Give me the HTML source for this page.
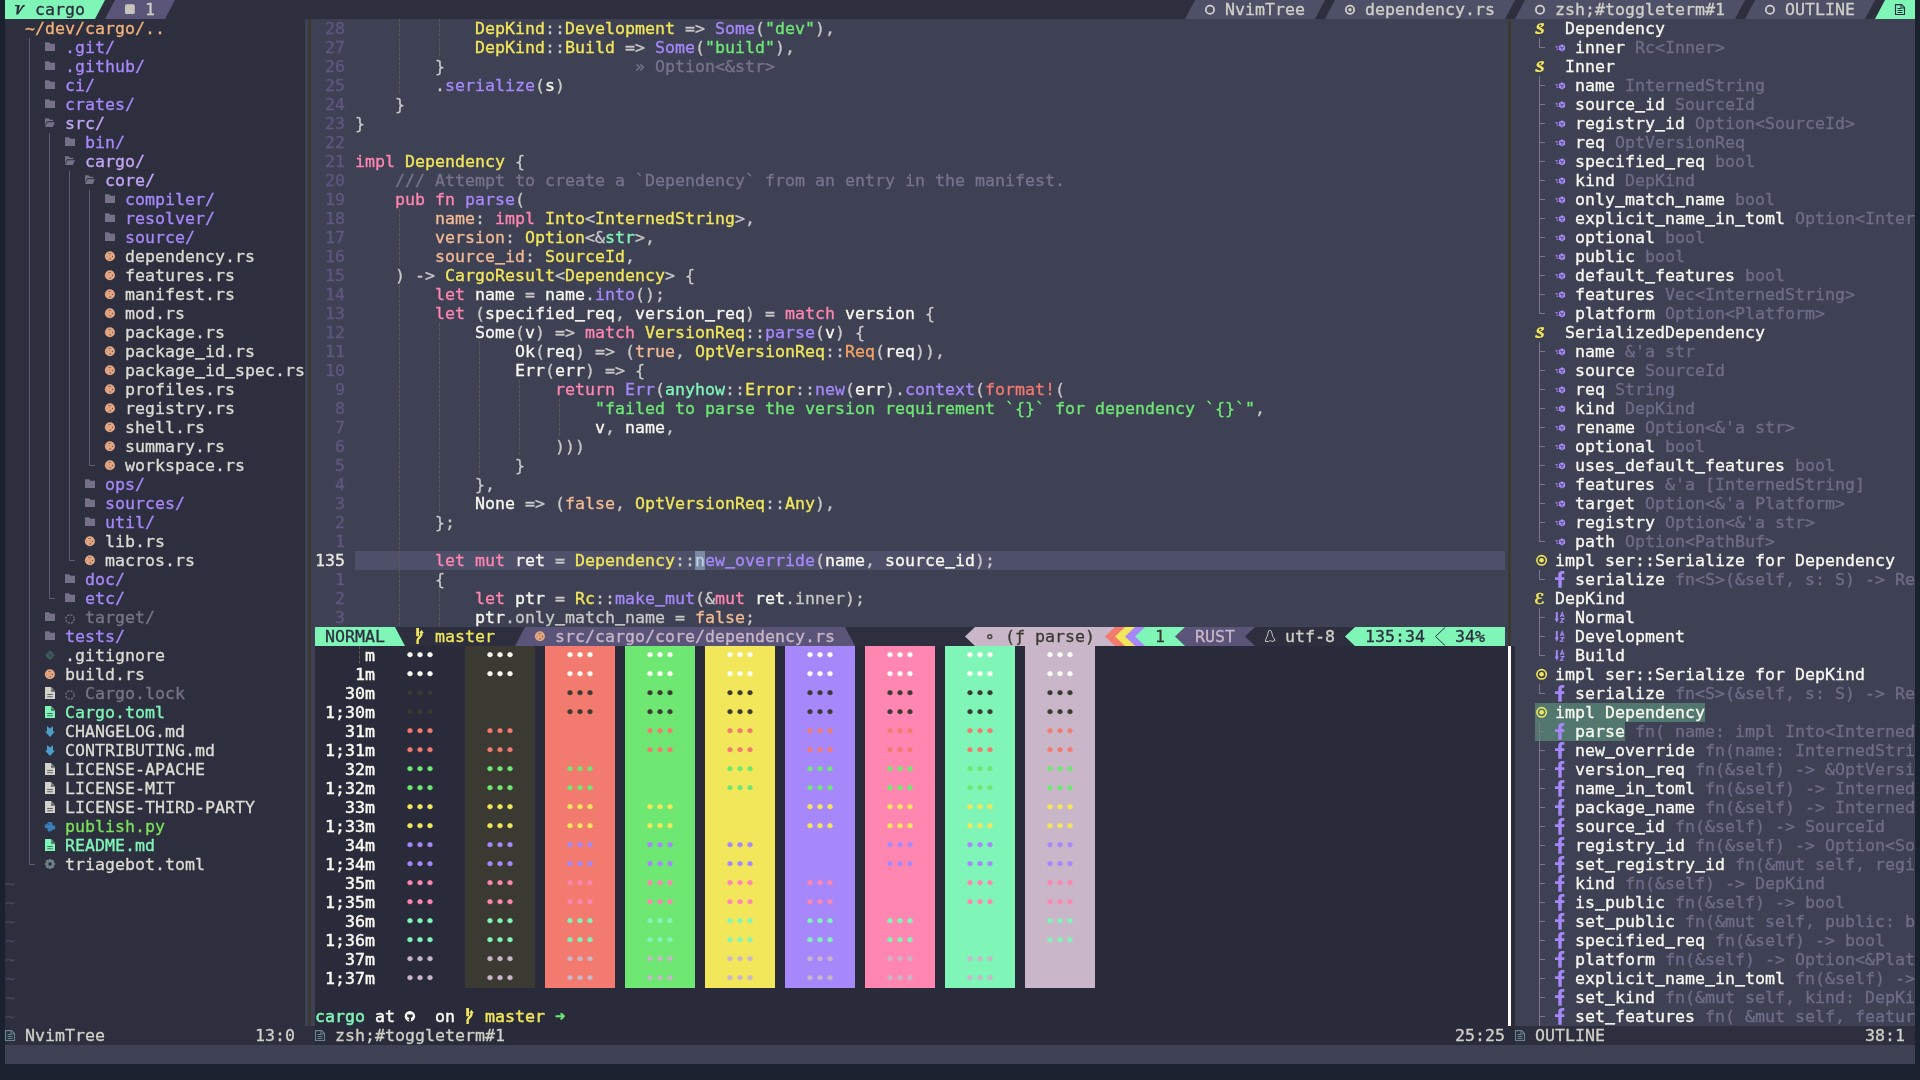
<!DOCTYPE html><html><head><meta charset="utf-8"><title>nvim - cargo</title><style>
html,body{margin:0;padding:0;background:#1a222f;}
body{width:1920px;height:1080px;overflow:hidden;position:relative;font-family:"DejaVu Sans Mono","Liberation Mono",monospace;font-size:16.61px;line-height:19px;}
#s{position:absolute;left:0;top:0;width:1920px;height:1080px;overflow:hidden;}
b{position:absolute;display:block;font-weight:normal;}
i{position:absolute;display:block;font-style:normal;white-space:pre;height:19px;-webkit-text-stroke:0.3px;}
u{text-decoration:none;display:inline-block;transform:translateY(-1.7px);text-shadow:0 .7px 0 currentColor,0 -.3px 0 currentColor;}
#t{position:absolute;left:0;top:0;width:1920px;height:1080px;will-change:transform;}
svg.o{position:absolute;left:0;top:0;}

</style></head><body><div id="s">
<b style="left:5px;top:0px;width:1910px;height:19px;background:#2d2e3e"></b>
<b style="left:5px;top:19px;width:300px;height:1007px;background:#2d2e3e"></b>
<b style="left:305px;top:19px;width:10px;height:1007px;background:#3e4054"></b>
<b style="left:308px;top:19px;width:3px;height:1007px;background:#3a3a32"></b>
<b style="left:315px;top:19px;width:1200px;height:608px;background:#3e4054"></b>
<b style="left:315px;top:627px;width:1190px;height:19px;background:#2d2e3e"></b>
<b style="left:1505px;top:627px;width:10px;height:19px;background:#3e4054"></b>
<b style="left:315px;top:646px;width:1200px;height:380px;background:#2a2b3a"></b>
<b style="left:1508px;top:19px;width:3px;height:627px;background:#3a3a32"></b>
<b style="left:1508px;top:646px;width:3px;height:380px;background:#fbfbf3"></b>
<b style="left:1515px;top:19px;width:400px;height:1007px;background:#3e4054"></b>
<b style="left:5px;top:1026px;width:1910px;height:19px;background:#2d2e3e"></b>
<b style="left:315px;top:1026px;width:1200px;height:19px;background:#2a2b3a"></b>
<b style="left:5px;top:1045px;width:1910px;height:19px;background:#3e4054"></b>
<b style="left:5px;top:0px;width:90px;height:19px;background:#80f5b8"></b>
<b style="left:115px;top:0px;width:50px;height:19px;background:#5a5578"></b>
<b style="left:1195px;top:0px;width:120px;height:19px;background:#4e5068"></b>
<b style="left:1335px;top:0px;width:170px;height:19px;background:#4e5068"></b>
<b style="left:1525px;top:0px;width:210px;height:19px;background:#4e5068"></b>
<b style="left:1755px;top:0px;width:110px;height:19px;background:#4e5068"></b>
<b style="left:1885px;top:0px;width:30px;height:19px;background:#80f5b8"></b>
<b style="left:355px;top:551px;width:1150px;height:19px;background:#4e5069"></b>
<b style="left:695px;top:551px;width:10px;height:19px;background:#7b8aa3"></b>
<b style="left:315px;top:627px;width:80px;height:19px;background:#80f5b8"></b>
<b style="left:525px;top:627px;width:320px;height:19px;background:#5a5578"></b>
<b style="left:975px;top:627px;width:130px;height:19px;background:#c9b6c8"></b>
<b style="left:1105px;top:627px;width:10px;height:19px;background:#c9b6c8"></b>
<b style="left:1115px;top:627px;width:10px;height:19px;background:#f27a6e"></b>
<b style="left:1125px;top:627px;width:10px;height:19px;background:#f2e75a"></b>
<b style="left:1135px;top:627px;width:10px;height:19px;background:#a688fa"></b>
<b style="left:1145px;top:627px;width:40px;height:19px;background:#80f5b8"></b>
<b style="left:1185px;top:627px;width:60px;height:19px;background:#5a5578"></b>
<b style="left:1245px;top:627px;width:10px;height:19px;background:#5a5578"></b>
<b style="left:1355px;top:627px;width:150px;height:19px;background:#80f5b8"></b>
<b style="left:465px;top:646px;width:70px;height:342px;background:#3a3a32"></b>
<b style="left:545px;top:646px;width:70px;height:342px;background:#f27a6e"></b>
<b style="left:625px;top:646px;width:70px;height:342px;background:#6ee873"></b>
<b style="left:705px;top:646px;width:70px;height:342px;background:#f2e75a"></b>
<b style="left:785px;top:646px;width:70px;height:342px;background:#a688fa"></b>
<b style="left:865px;top:646px;width:70px;height:342px;background:#ff86b0"></b>
<b style="left:945px;top:646px;width:70px;height:342px;background:#80f5b8"></b>
<b style="left:1025px;top:646px;width:70px;height:342px;background:#c9b6c8"></b>
<b style="left:1535px;top:703px;width:170px;height:19px;background:#52776f"></b>
<b style="left:1535px;top:722px;width:90px;height:19px;background:#52776f"></b>
<svg class="o" width="1920" height="1080" viewBox="0 0 1920 1080">
<polygon points="95,0 105,0 95,19" fill="#80f5b8"/>
<polygon points="115,0 115,19 105,19" fill="#5a5578"/>
<polygon points="165,0 175,0 165,19" fill="#5a5578"/>
<polygon points="1195,0 1195,19 1185,19" fill="#4e5068"/>
<circle cx="1210" cy="9.75" r="4.1" fill="none" stroke="#d0d0c8" stroke-width="1.8"/>
<polygon points="1315,0 1325,0 1315,19" fill="#4e5068"/>
<polygon points="1335,0 1335,19 1325,19" fill="#4e5068"/>
<circle cx="1350" cy="9.75" r="4.1" fill="none" stroke="#d0d0c8" stroke-width="1.8"/>
<circle cx="1350" cy="9.75" r="1.7" fill="#d0d0c8"/>
<polygon points="1505,0 1515,0 1505,19" fill="#4e5068"/>
<polygon points="1525,0 1525,19 1515,19" fill="#4e5068"/>
<circle cx="1540" cy="9.75" r="4.1" fill="none" stroke="#d0d0c8" stroke-width="1.8"/>
<polygon points="1735,0 1745,0 1735,19" fill="#4e5068"/>
<polygon points="1755,0 1755,19 1745,19" fill="#4e5068"/>
<circle cx="1770" cy="9.75" r="4.1" fill="none" stroke="#d0d0c8" stroke-width="1.8"/>
<polygon points="1865,0 1875,0 1865,19" fill="#4e5068"/>
<polygon points="1885,0 1885,19 1875,19" fill="#80f5b8"/>
<rect x="29" y="38" width="1" height="19" fill="#5f5a7a"/>
<rect x="29" y="57" width="1" height="19" fill="#5f5a7a"/>
<rect x="29" y="76" width="1" height="19" fill="#5f5a7a"/>
<rect x="29" y="95" width="1" height="19" fill="#5f5a7a"/>
<rect x="29" y="114" width="1" height="19" fill="#5f5a7a"/>
<rect x="29" y="133" width="1" height="19" fill="#5f5a7a"/>
<rect x="49" y="133" width="1" height="19" fill="#5f5a7a"/>
<rect x="29" y="152" width="1" height="19" fill="#5f5a7a"/>
<rect x="49" y="152" width="1" height="19" fill="#5f5a7a"/>
<rect x="29" y="171" width="1" height="19" fill="#5f5a7a"/>
<rect x="49" y="171" width="1" height="19" fill="#5f5a7a"/>
<rect x="69" y="171" width="1" height="19" fill="#5f5a7a"/>
<rect x="29" y="190" width="1" height="19" fill="#5f5a7a"/>
<rect x="49" y="190" width="1" height="19" fill="#5f5a7a"/>
<rect x="69" y="190" width="1" height="19" fill="#5f5a7a"/>
<rect x="89" y="190" width="1" height="19" fill="#5f5a7a"/>
<rect x="29" y="209" width="1" height="19" fill="#5f5a7a"/>
<rect x="49" y="209" width="1" height="19" fill="#5f5a7a"/>
<rect x="69" y="209" width="1" height="19" fill="#5f5a7a"/>
<rect x="89" y="209" width="1" height="19" fill="#5f5a7a"/>
<rect x="29" y="228" width="1" height="19" fill="#5f5a7a"/>
<rect x="49" y="228" width="1" height="19" fill="#5f5a7a"/>
<rect x="69" y="228" width="1" height="19" fill="#5f5a7a"/>
<rect x="89" y="228" width="1" height="19" fill="#5f5a7a"/>
<rect x="29" y="247" width="1" height="19" fill="#5f5a7a"/>
<rect x="49" y="247" width="1" height="19" fill="#5f5a7a"/>
<rect x="69" y="247" width="1" height="19" fill="#5f5a7a"/>
<rect x="89" y="247" width="1" height="19" fill="#5f5a7a"/>
<rect x="29" y="266" width="1" height="19" fill="#5f5a7a"/>
<rect x="49" y="266" width="1" height="19" fill="#5f5a7a"/>
<rect x="69" y="266" width="1" height="19" fill="#5f5a7a"/>
<rect x="89" y="266" width="1" height="19" fill="#5f5a7a"/>
<rect x="29" y="285" width="1" height="19" fill="#5f5a7a"/>
<rect x="49" y="285" width="1" height="19" fill="#5f5a7a"/>
<rect x="69" y="285" width="1" height="19" fill="#5f5a7a"/>
<rect x="89" y="285" width="1" height="19" fill="#5f5a7a"/>
<rect x="29" y="304" width="1" height="19" fill="#5f5a7a"/>
<rect x="49" y="304" width="1" height="19" fill="#5f5a7a"/>
<rect x="69" y="304" width="1" height="19" fill="#5f5a7a"/>
<rect x="89" y="304" width="1" height="19" fill="#5f5a7a"/>
<rect x="29" y="323" width="1" height="19" fill="#5f5a7a"/>
<rect x="49" y="323" width="1" height="19" fill="#5f5a7a"/>
<rect x="69" y="323" width="1" height="19" fill="#5f5a7a"/>
<rect x="89" y="323" width="1" height="19" fill="#5f5a7a"/>
<rect x="29" y="342" width="1" height="19" fill="#5f5a7a"/>
<rect x="49" y="342" width="1" height="19" fill="#5f5a7a"/>
<rect x="69" y="342" width="1" height="19" fill="#5f5a7a"/>
<rect x="89" y="342" width="1" height="19" fill="#5f5a7a"/>
<rect x="29" y="361" width="1" height="19" fill="#5f5a7a"/>
<rect x="49" y="361" width="1" height="19" fill="#5f5a7a"/>
<rect x="69" y="361" width="1" height="19" fill="#5f5a7a"/>
<rect x="89" y="361" width="1" height="19" fill="#5f5a7a"/>
<rect x="29" y="380" width="1" height="19" fill="#5f5a7a"/>
<rect x="49" y="380" width="1" height="19" fill="#5f5a7a"/>
<rect x="69" y="380" width="1" height="19" fill="#5f5a7a"/>
<rect x="89" y="380" width="1" height="19" fill="#5f5a7a"/>
<rect x="29" y="399" width="1" height="19" fill="#5f5a7a"/>
<rect x="49" y="399" width="1" height="19" fill="#5f5a7a"/>
<rect x="69" y="399" width="1" height="19" fill="#5f5a7a"/>
<rect x="89" y="399" width="1" height="19" fill="#5f5a7a"/>
<rect x="29" y="418" width="1" height="19" fill="#5f5a7a"/>
<rect x="49" y="418" width="1" height="19" fill="#5f5a7a"/>
<rect x="69" y="418" width="1" height="19" fill="#5f5a7a"/>
<rect x="89" y="418" width="1" height="19" fill="#5f5a7a"/>
<rect x="29" y="437" width="1" height="19" fill="#5f5a7a"/>
<rect x="49" y="437" width="1" height="19" fill="#5f5a7a"/>
<rect x="69" y="437" width="1" height="19" fill="#5f5a7a"/>
<rect x="89" y="437" width="1" height="19" fill="#5f5a7a"/>
<rect x="29" y="456" width="1" height="19" fill="#5f5a7a"/>
<rect x="49" y="456" width="1" height="19" fill="#5f5a7a"/>
<rect x="69" y="456" width="1" height="19" fill="#5f5a7a"/>
<rect x="89" y="456" width="1" height="10" fill="#5f5a7a"/>
<rect x="89" y="465" width="6" height="1" fill="#5f5a7a"/>
<rect x="29" y="475" width="1" height="19" fill="#5f5a7a"/>
<rect x="49" y="475" width="1" height="19" fill="#5f5a7a"/>
<rect x="69" y="475" width="1" height="19" fill="#5f5a7a"/>
<rect x="29" y="494" width="1" height="19" fill="#5f5a7a"/>
<rect x="49" y="494" width="1" height="19" fill="#5f5a7a"/>
<rect x="69" y="494" width="1" height="19" fill="#5f5a7a"/>
<rect x="29" y="513" width="1" height="19" fill="#5f5a7a"/>
<rect x="49" y="513" width="1" height="19" fill="#5f5a7a"/>
<rect x="69" y="513" width="1" height="19" fill="#5f5a7a"/>
<rect x="29" y="532" width="1" height="19" fill="#5f5a7a"/>
<rect x="49" y="532" width="1" height="19" fill="#5f5a7a"/>
<rect x="69" y="532" width="1" height="19" fill="#5f5a7a"/>
<rect x="29" y="551" width="1" height="19" fill="#5f5a7a"/>
<rect x="49" y="551" width="1" height="19" fill="#5f5a7a"/>
<rect x="69" y="551" width="1" height="10" fill="#5f5a7a"/>
<rect x="69" y="560" width="6" height="1" fill="#5f5a7a"/>
<rect x="29" y="570" width="1" height="19" fill="#5f5a7a"/>
<rect x="49" y="570" width="1" height="19" fill="#5f5a7a"/>
<rect x="29" y="589" width="1" height="19" fill="#5f5a7a"/>
<rect x="49" y="589" width="1" height="10" fill="#5f5a7a"/>
<rect x="49" y="598" width="6" height="1" fill="#5f5a7a"/>
<rect x="29" y="608" width="1" height="19" fill="#5f5a7a"/>
<rect x="29" y="627" width="1" height="19" fill="#5f5a7a"/>
<rect x="29" y="646" width="1" height="19" fill="#5f5a7a"/>
<rect x="29" y="665" width="1" height="19" fill="#5f5a7a"/>
<rect x="29" y="684" width="1" height="19" fill="#5f5a7a"/>
<rect x="29" y="703" width="1" height="19" fill="#5f5a7a"/>
<rect x="29" y="722" width="1" height="19" fill="#5f5a7a"/>
<rect x="29" y="741" width="1" height="19" fill="#5f5a7a"/>
<rect x="29" y="760" width="1" height="19" fill="#5f5a7a"/>
<rect x="29" y="779" width="1" height="19" fill="#5f5a7a"/>
<rect x="29" y="798" width="1" height="19" fill="#5f5a7a"/>
<rect x="29" y="817" width="1" height="19" fill="#5f5a7a"/>
<rect x="29" y="836" width="1" height="19" fill="#5f5a7a"/>
<rect x="29" y="855" width="1" height="10" fill="#5f5a7a"/>
<rect x="29" y="864" width="6" height="1" fill="#5f5a7a"/>
<line x1="399.5" y1="19" x2="399.5" y2="38" stroke="#5b594f" stroke-width="1" stroke-dasharray="3.5 1.25"/>
<line x1="439.5" y1="19" x2="439.5" y2="38" stroke="#5b594f" stroke-width="1" stroke-dasharray="3.5 1.25"/>
<line x1="399.5" y1="38" x2="399.5" y2="57" stroke="#5b594f" stroke-width="1" stroke-dasharray="3.5 1.25"/>
<line x1="439.5" y1="38" x2="439.5" y2="57" stroke="#5b594f" stroke-width="1" stroke-dasharray="3.5 1.25"/>
<line x1="399.5" y1="57" x2="399.5" y2="76" stroke="#5b594f" stroke-width="1" stroke-dasharray="3.5 1.25"/>
<line x1="399.5" y1="76" x2="399.5" y2="95" stroke="#5b594f" stroke-width="1" stroke-dasharray="3.5 1.25"/>
<line x1="399.5" y1="209" x2="399.5" y2="228" stroke="#5b594f" stroke-width="1" stroke-dasharray="3.5 1.25"/>
<line x1="399.5" y1="228" x2="399.5" y2="247" stroke="#5b594f" stroke-width="1" stroke-dasharray="3.5 1.25"/>
<line x1="399.5" y1="247" x2="399.5" y2="266" stroke="#5b594f" stroke-width="1" stroke-dasharray="3.5 1.25"/>
<line x1="399.5" y1="285" x2="399.5" y2="304" stroke="#5b594f" stroke-width="1" stroke-dasharray="3.5 1.25"/>
<line x1="399.5" y1="304" x2="399.5" y2="323" stroke="#5b594f" stroke-width="1" stroke-dasharray="3.5 1.25"/>
<line x1="399.5" y1="323" x2="399.5" y2="342" stroke="#5b594f" stroke-width="1" stroke-dasharray="3.5 1.25"/>
<line x1="439.5" y1="323" x2="439.5" y2="342" stroke="#5b594f" stroke-width="1" stroke-dasharray="3.5 1.25"/>
<line x1="399.5" y1="342" x2="399.5" y2="361" stroke="#5b594f" stroke-width="1" stroke-dasharray="3.5 1.25"/>
<line x1="439.5" y1="342" x2="439.5" y2="361" stroke="#5b594f" stroke-width="1" stroke-dasharray="3.5 1.25"/>
<line x1="479.5" y1="342" x2="479.5" y2="361" stroke="#5b594f" stroke-width="1" stroke-dasharray="3.5 1.25"/>
<line x1="399.5" y1="361" x2="399.5" y2="380" stroke="#5b594f" stroke-width="1" stroke-dasharray="3.5 1.25"/>
<line x1="439.5" y1="361" x2="439.5" y2="380" stroke="#5b594f" stroke-width="1" stroke-dasharray="3.5 1.25"/>
<line x1="479.5" y1="361" x2="479.5" y2="380" stroke="#5b594f" stroke-width="1" stroke-dasharray="3.5 1.25"/>
<line x1="399.5" y1="380" x2="399.5" y2="399" stroke="#5b594f" stroke-width="1" stroke-dasharray="3.5 1.25"/>
<line x1="439.5" y1="380" x2="439.5" y2="399" stroke="#5b594f" stroke-width="1" stroke-dasharray="3.5 1.25"/>
<line x1="479.5" y1="380" x2="479.5" y2="399" stroke="#5b594f" stroke-width="1" stroke-dasharray="3.5 1.25"/>
<line x1="519.5" y1="380" x2="519.5" y2="399" stroke="#5b594f" stroke-width="1" stroke-dasharray="3.5 1.25"/>
<line x1="399.5" y1="399" x2="399.5" y2="418" stroke="#5b594f" stroke-width="1" stroke-dasharray="3.5 1.25"/>
<line x1="439.5" y1="399" x2="439.5" y2="418" stroke="#5b594f" stroke-width="1" stroke-dasharray="3.5 1.25"/>
<line x1="479.5" y1="399" x2="479.5" y2="418" stroke="#5b594f" stroke-width="1" stroke-dasharray="3.5 1.25"/>
<line x1="519.5" y1="399" x2="519.5" y2="418" stroke="#5b594f" stroke-width="1" stroke-dasharray="3.5 1.25"/>
<line x1="559.5" y1="399" x2="559.5" y2="418" stroke="#5b594f" stroke-width="1" stroke-dasharray="3.5 1.25"/>
<line x1="399.5" y1="418" x2="399.5" y2="437" stroke="#5b594f" stroke-width="1" stroke-dasharray="3.5 1.25"/>
<line x1="439.5" y1="418" x2="439.5" y2="437" stroke="#5b594f" stroke-width="1" stroke-dasharray="3.5 1.25"/>
<line x1="479.5" y1="418" x2="479.5" y2="437" stroke="#5b594f" stroke-width="1" stroke-dasharray="3.5 1.25"/>
<line x1="519.5" y1="418" x2="519.5" y2="437" stroke="#5b594f" stroke-width="1" stroke-dasharray="3.5 1.25"/>
<line x1="559.5" y1="418" x2="559.5" y2="437" stroke="#5b594f" stroke-width="1" stroke-dasharray="3.5 1.25"/>
<line x1="399.5" y1="437" x2="399.5" y2="456" stroke="#5b594f" stroke-width="1" stroke-dasharray="3.5 1.25"/>
<line x1="439.5" y1="437" x2="439.5" y2="456" stroke="#5b594f" stroke-width="1" stroke-dasharray="3.5 1.25"/>
<line x1="479.5" y1="437" x2="479.5" y2="456" stroke="#5b594f" stroke-width="1" stroke-dasharray="3.5 1.25"/>
<line x1="519.5" y1="437" x2="519.5" y2="456" stroke="#5b594f" stroke-width="1" stroke-dasharray="3.5 1.25"/>
<line x1="399.5" y1="456" x2="399.5" y2="475" stroke="#5b594f" stroke-width="1" stroke-dasharray="3.5 1.25"/>
<line x1="439.5" y1="456" x2="439.5" y2="475" stroke="#5b594f" stroke-width="1" stroke-dasharray="3.5 1.25"/>
<line x1="479.5" y1="456" x2="479.5" y2="475" stroke="#5b594f" stroke-width="1" stroke-dasharray="3.5 1.25"/>
<line x1="399.5" y1="475" x2="399.5" y2="494" stroke="#5b594f" stroke-width="1" stroke-dasharray="3.5 1.25"/>
<line x1="439.5" y1="475" x2="439.5" y2="494" stroke="#5b594f" stroke-width="1" stroke-dasharray="3.5 1.25"/>
<line x1="399.5" y1="494" x2="399.5" y2="513" stroke="#5b594f" stroke-width="1" stroke-dasharray="3.5 1.25"/>
<line x1="439.5" y1="494" x2="439.5" y2="513" stroke="#5b594f" stroke-width="1" stroke-dasharray="3.5 1.25"/>
<line x1="399.5" y1="513" x2="399.5" y2="532" stroke="#5b594f" stroke-width="1" stroke-dasharray="3.5 1.25"/>
<line x1="399.5" y1="532" x2="399.5" y2="551" stroke="#5b594f" stroke-width="1" stroke-dasharray="3.5 1.25"/>
<line x1="399.5" y1="551" x2="399.5" y2="570" stroke="#5b594f" stroke-width="1" stroke-dasharray="3.5 1.25"/>
<line x1="399.5" y1="570" x2="399.5" y2="589" stroke="#5b594f" stroke-width="1" stroke-dasharray="3.5 1.25"/>
<line x1="399.5" y1="589" x2="399.5" y2="608" stroke="#5b594f" stroke-width="1" stroke-dasharray="3.5 1.25"/>
<line x1="439.5" y1="589" x2="439.5" y2="608" stroke="#5b594f" stroke-width="1" stroke-dasharray="3.5 1.25"/>
<line x1="399.5" y1="608" x2="399.5" y2="627" stroke="#5b594f" stroke-width="1" stroke-dasharray="3.5 1.25"/>
<line x1="439.5" y1="608" x2="439.5" y2="627" stroke="#5b594f" stroke-width="1" stroke-dasharray="3.5 1.25"/>
<polygon points="395,627 405,646 395,646" fill="#80f5b8"/>
<polygon points="525,627 525,646 515,646" fill="#5a5578"/>
<polygon points="845,627 855,646 845,646" fill="#5a5578"/>
<polygon points="975,627 965,636.5 975,646" fill="#c9b6c8"/>
<polygon points="1115,627 1105,636.5 1115,646" fill="#f27a6e"/>
<polygon points="1125,627 1115,636.5 1125,646" fill="#f2e75a"/>
<polygon points="1135,627 1125,636.5 1135,646" fill="#a688fa"/>
<polygon points="1145,627 1135,636.5 1145,646" fill="#80f5b8"/>
<polygon points="1185,627 1175,636.5 1185,646" fill="#5a5578"/>
<polygon points="1255,627 1245,636.5 1255,646" fill="#2d2e3e"/>
<polygon points="1355,627 1345,636.5 1355,646" fill="#80f5b8"/>
<polyline points="1445,627.5 1435.5,636.5 1445,645.5" fill="none" stroke="#2d2e3e" stroke-width="1"/>
<line x1="359.5" y1="646" x2="359.5" y2="665" stroke="#5b594f" stroke-width="1" stroke-dasharray="3.5 1.25"/>
<rect x="1539" y="38" width="1" height="10" fill="#7a7690"/>
<rect x="1539" y="47" width="6" height="1" fill="#7a7690"/>
<rect x="1539" y="76" width="1" height="19" fill="#7a7690"/>
<rect x="1539" y="85" width="6" height="1" fill="#7a7690"/>
<rect x="1539" y="95" width="1" height="19" fill="#7a7690"/>
<rect x="1539" y="104" width="6" height="1" fill="#7a7690"/>
<rect x="1539" y="114" width="1" height="19" fill="#7a7690"/>
<rect x="1539" y="123" width="6" height="1" fill="#7a7690"/>
<rect x="1539" y="133" width="1" height="19" fill="#7a7690"/>
<rect x="1539" y="142" width="6" height="1" fill="#7a7690"/>
<rect x="1539" y="152" width="1" height="19" fill="#7a7690"/>
<rect x="1539" y="161" width="6" height="1" fill="#7a7690"/>
<rect x="1539" y="171" width="1" height="19" fill="#7a7690"/>
<rect x="1539" y="180" width="6" height="1" fill="#7a7690"/>
<rect x="1539" y="190" width="1" height="19" fill="#7a7690"/>
<rect x="1539" y="199" width="6" height="1" fill="#7a7690"/>
<rect x="1539" y="209" width="1" height="19" fill="#7a7690"/>
<rect x="1539" y="218" width="6" height="1" fill="#7a7690"/>
<rect x="1539" y="228" width="1" height="19" fill="#7a7690"/>
<rect x="1539" y="237" width="6" height="1" fill="#7a7690"/>
<rect x="1539" y="247" width="1" height="19" fill="#7a7690"/>
<rect x="1539" y="256" width="6" height="1" fill="#7a7690"/>
<rect x="1539" y="266" width="1" height="19" fill="#7a7690"/>
<rect x="1539" y="275" width="6" height="1" fill="#7a7690"/>
<rect x="1539" y="285" width="1" height="19" fill="#7a7690"/>
<rect x="1539" y="294" width="6" height="1" fill="#7a7690"/>
<rect x="1539" y="304" width="1" height="10" fill="#7a7690"/>
<rect x="1539" y="313" width="6" height="1" fill="#7a7690"/>
<rect x="1539" y="342" width="1" height="19" fill="#7a7690"/>
<rect x="1539" y="351" width="6" height="1" fill="#7a7690"/>
<rect x="1539" y="361" width="1" height="19" fill="#7a7690"/>
<rect x="1539" y="370" width="6" height="1" fill="#7a7690"/>
<rect x="1539" y="380" width="1" height="19" fill="#7a7690"/>
<rect x="1539" y="389" width="6" height="1" fill="#7a7690"/>
<rect x="1539" y="399" width="1" height="19" fill="#7a7690"/>
<rect x="1539" y="408" width="6" height="1" fill="#7a7690"/>
<rect x="1539" y="418" width="1" height="19" fill="#7a7690"/>
<rect x="1539" y="427" width="6" height="1" fill="#7a7690"/>
<rect x="1539" y="437" width="1" height="19" fill="#7a7690"/>
<rect x="1539" y="446" width="6" height="1" fill="#7a7690"/>
<rect x="1539" y="456" width="1" height="19" fill="#7a7690"/>
<rect x="1539" y="465" width="6" height="1" fill="#7a7690"/>
<rect x="1539" y="475" width="1" height="19" fill="#7a7690"/>
<rect x="1539" y="484" width="6" height="1" fill="#7a7690"/>
<rect x="1539" y="494" width="1" height="19" fill="#7a7690"/>
<rect x="1539" y="503" width="6" height="1" fill="#7a7690"/>
<rect x="1539" y="513" width="1" height="19" fill="#7a7690"/>
<rect x="1539" y="522" width="6" height="1" fill="#7a7690"/>
<rect x="1539" y="532" width="1" height="10" fill="#7a7690"/>
<rect x="1539" y="541" width="6" height="1" fill="#7a7690"/>
<rect x="1539" y="570" width="1" height="10" fill="#7a7690"/>
<rect x="1539" y="579" width="6" height="1" fill="#7a7690"/>
<rect x="1539" y="608" width="1" height="19" fill="#7a7690"/>
<rect x="1539" y="617" width="6" height="1" fill="#7a7690"/>
<rect x="1539" y="627" width="1" height="19" fill="#7a7690"/>
<rect x="1539" y="636" width="6" height="1" fill="#7a7690"/>
<rect x="1539" y="646" width="1" height="10" fill="#7a7690"/>
<rect x="1539" y="655" width="6" height="1" fill="#7a7690"/>
<rect x="1539" y="684" width="1" height="10" fill="#7a7690"/>
<rect x="1539" y="693" width="6" height="1" fill="#7a7690"/>
<rect x="1539" y="722" width="1" height="19" fill="#7a7690"/>
<rect x="1539" y="731" width="6" height="1" fill="#7a7690"/>
<rect x="1539" y="741" width="1" height="19" fill="#7a7690"/>
<rect x="1539" y="750" width="6" height="1" fill="#7a7690"/>
<rect x="1539" y="760" width="1" height="19" fill="#7a7690"/>
<rect x="1539" y="769" width="6" height="1" fill="#7a7690"/>
<rect x="1539" y="779" width="1" height="19" fill="#7a7690"/>
<rect x="1539" y="788" width="6" height="1" fill="#7a7690"/>
<rect x="1539" y="798" width="1" height="19" fill="#7a7690"/>
<rect x="1539" y="807" width="6" height="1" fill="#7a7690"/>
<rect x="1539" y="817" width="1" height="19" fill="#7a7690"/>
<rect x="1539" y="826" width="6" height="1" fill="#7a7690"/>
<rect x="1539" y="836" width="1" height="19" fill="#7a7690"/>
<rect x="1539" y="845" width="6" height="1" fill="#7a7690"/>
<rect x="1539" y="855" width="1" height="19" fill="#7a7690"/>
<rect x="1539" y="864" width="6" height="1" fill="#7a7690"/>
<rect x="1539" y="874" width="1" height="19" fill="#7a7690"/>
<rect x="1539" y="883" width="6" height="1" fill="#7a7690"/>
<rect x="1539" y="893" width="1" height="19" fill="#7a7690"/>
<rect x="1539" y="902" width="6" height="1" fill="#7a7690"/>
<rect x="1539" y="912" width="1" height="19" fill="#7a7690"/>
<rect x="1539" y="921" width="6" height="1" fill="#7a7690"/>
<rect x="1539" y="931" width="1" height="19" fill="#7a7690"/>
<rect x="1539" y="940" width="6" height="1" fill="#7a7690"/>
<rect x="1539" y="950" width="1" height="19" fill="#7a7690"/>
<rect x="1539" y="959" width="6" height="1" fill="#7a7690"/>
<rect x="1539" y="969" width="1" height="19" fill="#7a7690"/>
<rect x="1539" y="978" width="6" height="1" fill="#7a7690"/>
<rect x="1539" y="988" width="1" height="19" fill="#7a7690"/>
<rect x="1539" y="997" width="6" height="1" fill="#7a7690"/>
<rect x="1539" y="1007" width="1" height="19" fill="#7a7690"/>
<rect x="1539" y="1016" width="6" height="1" fill="#7a7690"/>
<g transform="translate(45,38)"><polygon points="0,4.3 4,4.3 5.5,5.8 10,5.8 10,13 0,13" fill="#747087"/></g>
<g transform="translate(45,57)"><polygon points="0,4.3 4,4.3 5.5,5.8 10,5.8 10,13 0,13" fill="#747087"/></g>
<g transform="translate(45,76)"><polygon points="0,4.3 4,4.3 5.5,5.8 10,5.8 10,13 0,13" fill="#747087"/></g>
<g transform="translate(45,95)"><polygon points="0,4.3 4,4.3 5.5,5.8 10,5.8 10,13 0,13" fill="#747087"/></g>
<g transform="translate(45,114)"><polygon points="0,4.3 3.6,4.3 5,5.8 8.3,5.8 8.3,7.3 2,7.3 0,11.5" fill="#747087"/><polygon points="2.4,8.2 10,8.2 7.8,13 0,13" fill="#747087"/></g>
<g transform="translate(65,133)"><polygon points="0,4.3 4,4.3 5.5,5.8 10,5.8 10,13 0,13" fill="#747087"/></g>
<g transform="translate(65,152)"><polygon points="0,4.3 3.6,4.3 5,5.8 8.3,5.8 8.3,7.3 2,7.3 0,11.5" fill="#747087"/><polygon points="2.4,8.2 10,8.2 7.8,13 0,13" fill="#747087"/></g>
<g transform="translate(85,171)"><polygon points="0,4.3 3.6,4.3 5,5.8 8.3,5.8 8.3,7.3 2,7.3 0,11.5" fill="#747087"/><polygon points="2.4,8.2 10,8.2 7.8,13 0,13" fill="#747087"/></g>
<g transform="translate(105,190)"><polygon points="0,4.3 4,4.3 5.5,5.8 10,5.8 10,13 0,13" fill="#747087"/></g>
<g transform="translate(105,209)"><polygon points="0,4.3 4,4.3 5.5,5.8 10,5.8 10,13 0,13" fill="#747087"/></g>
<g transform="translate(105,228)"><polygon points="0,4.3 4,4.3 5.5,5.8 10,5.8 10,13 0,13" fill="#747087"/></g>
<g transform="translate(105,247)"><circle cx="4.9" cy="9.3" r="5.05" fill="#e3a683"/><rect x="3.1" y="6.1" width="3" height="0.8" fill="#4a3438" opacity="0.55"/><circle cx="7.4" cy="9.4" r="0.6" fill="#4a3438" opacity="0.85"/><circle cx="5.2" cy="11.8" r="0.9" fill="#4a3438" opacity="0.55"/><circle cx="1.8" cy="9.4" r="0.5" fill="#4a3438" opacity="0.3"/><circle cx="4.6" cy="8.5" r="0.5" fill="#4a3438" opacity="0.3"/></g>
<g transform="translate(105,266)"><circle cx="4.9" cy="9.3" r="5.05" fill="#e3a683"/><rect x="3.1" y="6.1" width="3" height="0.8" fill="#4a3438" opacity="0.55"/><circle cx="7.4" cy="9.4" r="0.6" fill="#4a3438" opacity="0.85"/><circle cx="5.2" cy="11.8" r="0.9" fill="#4a3438" opacity="0.55"/><circle cx="1.8" cy="9.4" r="0.5" fill="#4a3438" opacity="0.3"/><circle cx="4.6" cy="8.5" r="0.5" fill="#4a3438" opacity="0.3"/></g>
<g transform="translate(105,285)"><circle cx="4.9" cy="9.3" r="5.05" fill="#e3a683"/><rect x="3.1" y="6.1" width="3" height="0.8" fill="#4a3438" opacity="0.55"/><circle cx="7.4" cy="9.4" r="0.6" fill="#4a3438" opacity="0.85"/><circle cx="5.2" cy="11.8" r="0.9" fill="#4a3438" opacity="0.55"/><circle cx="1.8" cy="9.4" r="0.5" fill="#4a3438" opacity="0.3"/><circle cx="4.6" cy="8.5" r="0.5" fill="#4a3438" opacity="0.3"/></g>
<g transform="translate(105,304)"><circle cx="4.9" cy="9.3" r="5.05" fill="#e3a683"/><rect x="3.1" y="6.1" width="3" height="0.8" fill="#4a3438" opacity="0.55"/><circle cx="7.4" cy="9.4" r="0.6" fill="#4a3438" opacity="0.85"/><circle cx="5.2" cy="11.8" r="0.9" fill="#4a3438" opacity="0.55"/><circle cx="1.8" cy="9.4" r="0.5" fill="#4a3438" opacity="0.3"/><circle cx="4.6" cy="8.5" r="0.5" fill="#4a3438" opacity="0.3"/></g>
<g transform="translate(105,323)"><circle cx="4.9" cy="9.3" r="5.05" fill="#e3a683"/><rect x="3.1" y="6.1" width="3" height="0.8" fill="#4a3438" opacity="0.55"/><circle cx="7.4" cy="9.4" r="0.6" fill="#4a3438" opacity="0.85"/><circle cx="5.2" cy="11.8" r="0.9" fill="#4a3438" opacity="0.55"/><circle cx="1.8" cy="9.4" r="0.5" fill="#4a3438" opacity="0.3"/><circle cx="4.6" cy="8.5" r="0.5" fill="#4a3438" opacity="0.3"/></g>
<g transform="translate(105,342)"><circle cx="4.9" cy="9.3" r="5.05" fill="#e3a683"/><rect x="3.1" y="6.1" width="3" height="0.8" fill="#4a3438" opacity="0.55"/><circle cx="7.4" cy="9.4" r="0.6" fill="#4a3438" opacity="0.85"/><circle cx="5.2" cy="11.8" r="0.9" fill="#4a3438" opacity="0.55"/><circle cx="1.8" cy="9.4" r="0.5" fill="#4a3438" opacity="0.3"/><circle cx="4.6" cy="8.5" r="0.5" fill="#4a3438" opacity="0.3"/></g>
<g transform="translate(105,361)"><circle cx="4.9" cy="9.3" r="5.05" fill="#e3a683"/><rect x="3.1" y="6.1" width="3" height="0.8" fill="#4a3438" opacity="0.55"/><circle cx="7.4" cy="9.4" r="0.6" fill="#4a3438" opacity="0.85"/><circle cx="5.2" cy="11.8" r="0.9" fill="#4a3438" opacity="0.55"/><circle cx="1.8" cy="9.4" r="0.5" fill="#4a3438" opacity="0.3"/><circle cx="4.6" cy="8.5" r="0.5" fill="#4a3438" opacity="0.3"/></g>
<g transform="translate(105,380)"><circle cx="4.9" cy="9.3" r="5.05" fill="#e3a683"/><rect x="3.1" y="6.1" width="3" height="0.8" fill="#4a3438" opacity="0.55"/><circle cx="7.4" cy="9.4" r="0.6" fill="#4a3438" opacity="0.85"/><circle cx="5.2" cy="11.8" r="0.9" fill="#4a3438" opacity="0.55"/><circle cx="1.8" cy="9.4" r="0.5" fill="#4a3438" opacity="0.3"/><circle cx="4.6" cy="8.5" r="0.5" fill="#4a3438" opacity="0.3"/></g>
<g transform="translate(105,399)"><circle cx="4.9" cy="9.3" r="5.05" fill="#e3a683"/><rect x="3.1" y="6.1" width="3" height="0.8" fill="#4a3438" opacity="0.55"/><circle cx="7.4" cy="9.4" r="0.6" fill="#4a3438" opacity="0.85"/><circle cx="5.2" cy="11.8" r="0.9" fill="#4a3438" opacity="0.55"/><circle cx="1.8" cy="9.4" r="0.5" fill="#4a3438" opacity="0.3"/><circle cx="4.6" cy="8.5" r="0.5" fill="#4a3438" opacity="0.3"/></g>
<g transform="translate(105,418)"><circle cx="4.9" cy="9.3" r="5.05" fill="#e3a683"/><rect x="3.1" y="6.1" width="3" height="0.8" fill="#4a3438" opacity="0.55"/><circle cx="7.4" cy="9.4" r="0.6" fill="#4a3438" opacity="0.85"/><circle cx="5.2" cy="11.8" r="0.9" fill="#4a3438" opacity="0.55"/><circle cx="1.8" cy="9.4" r="0.5" fill="#4a3438" opacity="0.3"/><circle cx="4.6" cy="8.5" r="0.5" fill="#4a3438" opacity="0.3"/></g>
<g transform="translate(105,437)"><circle cx="4.9" cy="9.3" r="5.05" fill="#e3a683"/><rect x="3.1" y="6.1" width="3" height="0.8" fill="#4a3438" opacity="0.55"/><circle cx="7.4" cy="9.4" r="0.6" fill="#4a3438" opacity="0.85"/><circle cx="5.2" cy="11.8" r="0.9" fill="#4a3438" opacity="0.55"/><circle cx="1.8" cy="9.4" r="0.5" fill="#4a3438" opacity="0.3"/><circle cx="4.6" cy="8.5" r="0.5" fill="#4a3438" opacity="0.3"/></g>
<g transform="translate(105,456)"><circle cx="4.9" cy="9.3" r="5.05" fill="#e3a683"/><rect x="3.1" y="6.1" width="3" height="0.8" fill="#4a3438" opacity="0.55"/><circle cx="7.4" cy="9.4" r="0.6" fill="#4a3438" opacity="0.85"/><circle cx="5.2" cy="11.8" r="0.9" fill="#4a3438" opacity="0.55"/><circle cx="1.8" cy="9.4" r="0.5" fill="#4a3438" opacity="0.3"/><circle cx="4.6" cy="8.5" r="0.5" fill="#4a3438" opacity="0.3"/></g>
<g transform="translate(85,475)"><polygon points="0,4.3 4,4.3 5.5,5.8 10,5.8 10,13 0,13" fill="#747087"/></g>
<g transform="translate(85,494)"><polygon points="0,4.3 4,4.3 5.5,5.8 10,5.8 10,13 0,13" fill="#747087"/></g>
<g transform="translate(85,513)"><polygon points="0,4.3 4,4.3 5.5,5.8 10,5.8 10,13 0,13" fill="#747087"/></g>
<g transform="translate(85,532)"><circle cx="4.9" cy="9.3" r="5.05" fill="#e3a683"/><rect x="3.1" y="6.1" width="3" height="0.8" fill="#4a3438" opacity="0.55"/><circle cx="7.4" cy="9.4" r="0.6" fill="#4a3438" opacity="0.85"/><circle cx="5.2" cy="11.8" r="0.9" fill="#4a3438" opacity="0.55"/><circle cx="1.8" cy="9.4" r="0.5" fill="#4a3438" opacity="0.3"/><circle cx="4.6" cy="8.5" r="0.5" fill="#4a3438" opacity="0.3"/></g>
<g transform="translate(85,551)"><circle cx="4.9" cy="9.3" r="5.05" fill="#e3a683"/><rect x="3.1" y="6.1" width="3" height="0.8" fill="#4a3438" opacity="0.55"/><circle cx="7.4" cy="9.4" r="0.6" fill="#4a3438" opacity="0.85"/><circle cx="5.2" cy="11.8" r="0.9" fill="#4a3438" opacity="0.55"/><circle cx="1.8" cy="9.4" r="0.5" fill="#4a3438" opacity="0.3"/><circle cx="4.6" cy="8.5" r="0.5" fill="#4a3438" opacity="0.3"/></g>
<g transform="translate(65,570)"><polygon points="0,4.3 4,4.3 5.5,5.8 10,5.8 10,13 0,13" fill="#747087"/></g>
<g transform="translate(65,589)"><polygon points="0,4.3 4,4.3 5.5,5.8 10,5.8 10,13 0,13" fill="#747087"/></g>
<g transform="translate(45,608)"><polygon points="0,4.3 4,4.3 5.5,5.8 10,5.8 10,13 0,13" fill="#747087"/></g>
<g transform="translate(65,608)"><circle cx="5" cy="11" r="4.2" fill="none" stroke="#787589" stroke-width="1.2" stroke-dasharray="2.1 1.2"/></g>
<g transform="translate(45,627)"><polygon points="0,4.3 4,4.3 5.5,5.8 10,5.8 10,13 0,13" fill="#747087"/></g>
<g transform="translate(45,646)"><polygon points="5,4.2 10,9.2 5,14.2 0,9.2" fill="#3f595d"/><path d="M3.6,7.6 L6.2,10.4 M5.2,7.8 V11.2" stroke="#2d2e3e" stroke-width="0.8" opacity="0.7"/></g>
<g transform="translate(45,665)"><circle cx="4.9" cy="9.3" r="5.05" fill="#e3a683"/><rect x="3.1" y="6.1" width="3" height="0.8" fill="#4a3438" opacity="0.55"/><circle cx="7.4" cy="9.4" r="0.6" fill="#4a3438" opacity="0.85"/><circle cx="5.2" cy="11.8" r="0.9" fill="#4a3438" opacity="0.55"/><circle cx="1.8" cy="9.4" r="0.5" fill="#4a3438" opacity="0.3"/><circle cx="4.6" cy="8.5" r="0.5" fill="#4a3438" opacity="0.3"/></g>
<g transform="translate(45,684)"><polygon points="0,3 6,3 10,7 10,15 0,15" fill="#d2d2ca"/><polygon points="6,3 10,7 6,7" fill="#2d2e3e" opacity="0.45"/><rect x="6" y="6.6" width="4" height="0.9" fill="#2d2e3e"/><rect x="2.2" y="10" width="5.6" height="0.9" fill="#2d2e3e" opacity="0.75"/><rect x="2.2" y="12.3" width="5.6" height="0.9" fill="#2d2e3e" opacity="0.75"/></g>
<g transform="translate(65,684)"><circle cx="5" cy="11" r="4.2" fill="none" stroke="#787589" stroke-width="1.2" stroke-dasharray="2.1 1.2"/></g>
<g transform="translate(45,703)"><polygon points="0,3 6,3 10,7 10,15 0,15" fill="#80f5b8"/><polygon points="6,3 10,7 6,7" fill="#2d2e3e" opacity="0.45"/><rect x="6" y="6.6" width="4" height="0.9" fill="#2d2e3e"/><rect x="2.2" y="10" width="5.6" height="0.9" fill="#2d2e3e" opacity="0.75"/><rect x="2.2" y="12.3" width="5.6" height="0.9" fill="#2d2e3e" opacity="0.75"/></g>
<g transform="translate(45,722)"><polygon points="2,4 5,6.5 8,4 8,9.5 10,9.5 5,15 0,9.5 2,9.5" fill="#4a9ec8"/></g>
<g transform="translate(45,741)"><polygon points="2,4 5,6.5 8,4 8,9.5 10,9.5 5,15 0,9.5 2,9.5" fill="#4a9ec8"/></g>
<g transform="translate(45,760)"><polygon points="0,3 6,3 10,7 10,15 0,15" fill="#d2d2ca"/><polygon points="6,3 10,7 6,7" fill="#2d2e3e" opacity="0.45"/><rect x="6" y="6.6" width="4" height="0.9" fill="#2d2e3e"/><rect x="2.2" y="10" width="5.6" height="0.9" fill="#2d2e3e" opacity="0.75"/><rect x="2.2" y="12.3" width="5.6" height="0.9" fill="#2d2e3e" opacity="0.75"/></g>
<g transform="translate(45,779)"><polygon points="0,3 6,3 10,7 10,15 0,15" fill="#d2d2ca"/><polygon points="6,3 10,7 6,7" fill="#2d2e3e" opacity="0.45"/><rect x="6" y="6.6" width="4" height="0.9" fill="#2d2e3e"/><rect x="2.2" y="10" width="5.6" height="0.9" fill="#2d2e3e" opacity="0.75"/><rect x="2.2" y="12.3" width="5.6" height="0.9" fill="#2d2e3e" opacity="0.75"/></g>
<g transform="translate(45,798)"><polygon points="0,3 6,3 10,7 10,15 0,15" fill="#d2d2ca"/><polygon points="6,3 10,7 6,7" fill="#2d2e3e" opacity="0.45"/><rect x="6" y="6.6" width="4" height="0.9" fill="#2d2e3e"/><rect x="2.2" y="10" width="5.6" height="0.9" fill="#2d2e3e" opacity="0.75"/><rect x="2.2" y="12.3" width="5.6" height="0.9" fill="#2d2e3e" opacity="0.75"/></g>
<g transform="translate(45,817.6)"><path transform="scale(1,0.9)" d="M2.6,5 h3.6 a1.2,1.2 0 0 1 1.2,1.2 v2.6 h1.6 a1.2,1.2 0 0 1 1.2,1.2 v2 a1.2,1.2 0 0 1 -1.2,1.2 h-1.6 v1 a1.2,1.2 0 0 1 -1.2,1.2 h-2.4 a1.2,1.2 0 0 1 -1.2,-1.2 v-2.4 h-1.6 a1.2,1.2 0 0 1 -1.2,-1.2 v-2 a1.2,1.2 0 0 1 1.2,-1.2 h1.4 v-1.2 a1.2,1.2 0 0 1 1.2,-1.2 z" fill="#3a7eb8"/><circle cx="3.9" cy="6.4" r="0.6" fill="#2d2e3e"/><circle cx="6.2" cy="13.6" r="0.6" fill="#2d2e3e"/></g>
<g transform="translate(45,836)"><polygon points="0,3 6,3 10,7 10,15 0,15" fill="#80f5b8"/><polygon points="6,3 10,7 6,7" fill="#2d2e3e" opacity="0.45"/><rect x="6" y="6.6" width="4" height="0.9" fill="#2d2e3e"/><rect x="2.2" y="10" width="5.6" height="0.9" fill="#2d2e3e" opacity="0.75"/><rect x="2.2" y="12.3" width="5.6" height="0.9" fill="#2d2e3e" opacity="0.75"/></g>
<g transform="translate(45,855)"><rect x="3.7" y="3.9" width="2.6" height="10.2" rx="0.4" transform="rotate(0 5 9)" fill="#6d8086"/><rect x="3.7" y="3.9" width="2.6" height="10.2" rx="0.4" transform="rotate(45 5 9)" fill="#6d8086"/><rect x="3.7" y="3.9" width="2.6" height="10.2" rx="0.4" transform="rotate(90 5 9)" fill="#6d8086"/><rect x="3.7" y="3.9" width="2.6" height="10.2" rx="0.4" transform="rotate(135 5 9)" fill="#6d8086"/><circle cx="5" cy="9" r="4" fill="#6d8086"/><circle cx="5" cy="9" r="1.8" fill="#2d2e3e"/></g>
<g transform="translate(15,0)"><path d="M0,5 H4.8 L3.5,11.4 L7.4,5.6 C7.8,5 8.6,4.7 9.7,4.7 V6.4 C9,6.4 8.7,6.6 8.4,7 L3,14.6 H1.2 L2,6.3 H0 Z" fill="#2d2e3e"/></g>
<g transform="translate(125,0)"><rect x="0" y="4.2" width="9.8" height="9.8" rx="1.6" fill="#c6c4bc"/></g>
<g transform="translate(415,627)"><path d="M2.6,1 V9.3" stroke="#f2e75a" stroke-width="2.8" fill="none"/><path d="M2.6,17 V13.5 C2.6,10.5 6.5,10.5 6.5,7 V5" stroke="#f2e75a" stroke-width="2.4" fill="none"/><polygon points="4.2,6 6.5,2.8 8.8,6" fill="#f2e75a"/></g>
<g transform="translate(535,627)"><circle cx="4.9" cy="9.3" r="5.05" fill="#e3a683"/><rect x="3.1" y="6.1" width="3" height="0.8" fill="#4a3438" opacity="0.55"/><circle cx="7.4" cy="9.4" r="0.6" fill="#4a3438" opacity="0.85"/><circle cx="5.2" cy="11.8" r="0.9" fill="#4a3438" opacity="0.55"/><circle cx="1.8" cy="9.4" r="0.5" fill="#4a3438" opacity="0.3"/><circle cx="4.6" cy="8.5" r="0.5" fill="#4a3438" opacity="0.3"/></g>
<g transform="translate(1265,627)"><path d="M4.8,3.3 C3,3.3 3.3,6 2.7,8 C2,10 0.5,12 0.4,14.5 L3.5,14.5 C4.5,13.3 6,13.5 7,14.5 L10,13.5 C9,11 7.8,10 7.3,8 C6.8,6 6.8,3.3 4.8,3.3 Z" fill="none" stroke="#c8c8c0" stroke-width="1"/></g>
<g transform="translate(465,1007)"><path d="M2.6,1 V9.3" stroke="#f2e75a" stroke-width="2.8" fill="none"/><path d="M2.6,17 V13.5 C2.6,10.5 6.5,10.5 6.5,7 V5" stroke="#f2e75a" stroke-width="2.4" fill="none"/><polygon points="4.2,6 6.5,2.8 8.8,6" fill="#f2e75a"/></g>
<g transform="translate(405,1007)"><circle cx="4.9" cy="9.3" r="5.2" fill="#fbfbf3"/><path d="M2.4,7.3 L3.2,7.6 H6.6 L7.5,7.3 L7.7,8.6 C8,9.6 7.4,10.6 6,10.8 V14.6 H4.2 V13 C3,13.4 2.6,12.6 2.2,12.2 C3,12.2 3.2,12.6 4.2,12.4 V10.8 C2.6,10.6 1.9,9.6 2.2,8.6 Z" fill="#2a2b3a"/></g>
<g transform="translate(5,1026)"><path d="M0.5,4.6 H6.6 L9.5,7.5 V14.5 H0.5 Z" fill="none" stroke="#668690" stroke-width="1.1"/><path d="M2.5,8.5 H6 M2.5,10.5 H7.5 M2.5,12.5 H7.5 M6,5 V8 H9.2" stroke="#668690" stroke-width="1" fill="none"/></g>
<g transform="translate(315,1026)"><path d="M0.5,4.6 H6.6 L9.5,7.5 V14.5 H0.5 Z" fill="none" stroke="#668690" stroke-width="1.1"/><path d="M2.5,8.5 H6 M2.5,10.5 H7.5 M2.5,12.5 H7.5 M6,5 V8 H9.2" stroke="#668690" stroke-width="1" fill="none"/></g>
<g transform="translate(1515,1026)"><path d="M0.5,4.6 H6.6 L9.5,7.5 V14.5 H0.5 Z" fill="none" stroke="#668690" stroke-width="1.1"/><path d="M2.5,8.5 H6 M2.5,10.5 H7.5 M2.5,12.5 H7.5 M6,5 V8 H9.2" stroke="#668690" stroke-width="1" fill="none"/></g>
<g transform="translate(1895,0)"><path d="M0.5,4.6 H6.6 L9.5,7.5 V14.5 H0.5 Z" fill="none" stroke="#2d2e3e" stroke-width="1.1"/><path d="M2.5,8.5 H6 M2.5,10.5 H7.5 M2.5,12.5 H7.5 M6,5 V8 H9.2" stroke="#2d2e3e" stroke-width="1" fill="none"/></g>
<g transform="translate(1555,36.7)"><polygon points="3.9,9.4 7,7.6 10.1,9.4 10.1,13 7,14.8 3.9,13" fill="#a688fa"/><path d="M7,11.2 V13.6 M7,11.2 L5,10 M7,11.2 L9,10" stroke="#3e4054" stroke-width="0.8" fill="none"/><polygon points="0,9.6 3,9.6 2,11.6" fill="#a688fa"/><rect x="1.6" y="12" width="1.6" height="1.2" fill="#a688fa"/></g>
<g transform="translate(1555,74.7)"><polygon points="3.9,9.4 7,7.6 10.1,9.4 10.1,13 7,14.8 3.9,13" fill="#a688fa"/><path d="M7,11.2 V13.6 M7,11.2 L5,10 M7,11.2 L9,10" stroke="#3e4054" stroke-width="0.8" fill="none"/><polygon points="0,9.6 3,9.6 2,11.6" fill="#a688fa"/><rect x="1.6" y="12" width="1.6" height="1.2" fill="#a688fa"/></g>
<g transform="translate(1555,93.7)"><polygon points="3.9,9.4 7,7.6 10.1,9.4 10.1,13 7,14.8 3.9,13" fill="#a688fa"/><path d="M7,11.2 V13.6 M7,11.2 L5,10 M7,11.2 L9,10" stroke="#3e4054" stroke-width="0.8" fill="none"/><polygon points="0,9.6 3,9.6 2,11.6" fill="#a688fa"/><rect x="1.6" y="12" width="1.6" height="1.2" fill="#a688fa"/></g>
<g transform="translate(1555,112.7)"><polygon points="3.9,9.4 7,7.6 10.1,9.4 10.1,13 7,14.8 3.9,13" fill="#a688fa"/><path d="M7,11.2 V13.6 M7,11.2 L5,10 M7,11.2 L9,10" stroke="#3e4054" stroke-width="0.8" fill="none"/><polygon points="0,9.6 3,9.6 2,11.6" fill="#a688fa"/><rect x="1.6" y="12" width="1.6" height="1.2" fill="#a688fa"/></g>
<g transform="translate(1555,131.7)"><polygon points="3.9,9.4 7,7.6 10.1,9.4 10.1,13 7,14.8 3.9,13" fill="#a688fa"/><path d="M7,11.2 V13.6 M7,11.2 L5,10 M7,11.2 L9,10" stroke="#3e4054" stroke-width="0.8" fill="none"/><polygon points="0,9.6 3,9.6 2,11.6" fill="#a688fa"/><rect x="1.6" y="12" width="1.6" height="1.2" fill="#a688fa"/></g>
<g transform="translate(1555,150.7)"><polygon points="3.9,9.4 7,7.6 10.1,9.4 10.1,13 7,14.8 3.9,13" fill="#a688fa"/><path d="M7,11.2 V13.6 M7,11.2 L5,10 M7,11.2 L9,10" stroke="#3e4054" stroke-width="0.8" fill="none"/><polygon points="0,9.6 3,9.6 2,11.6" fill="#a688fa"/><rect x="1.6" y="12" width="1.6" height="1.2" fill="#a688fa"/></g>
<g transform="translate(1555,169.7)"><polygon points="3.9,9.4 7,7.6 10.1,9.4 10.1,13 7,14.8 3.9,13" fill="#a688fa"/><path d="M7,11.2 V13.6 M7,11.2 L5,10 M7,11.2 L9,10" stroke="#3e4054" stroke-width="0.8" fill="none"/><polygon points="0,9.6 3,9.6 2,11.6" fill="#a688fa"/><rect x="1.6" y="12" width="1.6" height="1.2" fill="#a688fa"/></g>
<g transform="translate(1555,188.7)"><polygon points="3.9,9.4 7,7.6 10.1,9.4 10.1,13 7,14.8 3.9,13" fill="#a688fa"/><path d="M7,11.2 V13.6 M7,11.2 L5,10 M7,11.2 L9,10" stroke="#3e4054" stroke-width="0.8" fill="none"/><polygon points="0,9.6 3,9.6 2,11.6" fill="#a688fa"/><rect x="1.6" y="12" width="1.6" height="1.2" fill="#a688fa"/></g>
<g transform="translate(1555,207.7)"><polygon points="3.9,9.4 7,7.6 10.1,9.4 10.1,13 7,14.8 3.9,13" fill="#a688fa"/><path d="M7,11.2 V13.6 M7,11.2 L5,10 M7,11.2 L9,10" stroke="#3e4054" stroke-width="0.8" fill="none"/><polygon points="0,9.6 3,9.6 2,11.6" fill="#a688fa"/><rect x="1.6" y="12" width="1.6" height="1.2" fill="#a688fa"/></g>
<g transform="translate(1555,226.7)"><polygon points="3.9,9.4 7,7.6 10.1,9.4 10.1,13 7,14.8 3.9,13" fill="#a688fa"/><path d="M7,11.2 V13.6 M7,11.2 L5,10 M7,11.2 L9,10" stroke="#3e4054" stroke-width="0.8" fill="none"/><polygon points="0,9.6 3,9.6 2,11.6" fill="#a688fa"/><rect x="1.6" y="12" width="1.6" height="1.2" fill="#a688fa"/></g>
<g transform="translate(1555,245.7)"><polygon points="3.9,9.4 7,7.6 10.1,9.4 10.1,13 7,14.8 3.9,13" fill="#a688fa"/><path d="M7,11.2 V13.6 M7,11.2 L5,10 M7,11.2 L9,10" stroke="#3e4054" stroke-width="0.8" fill="none"/><polygon points="0,9.6 3,9.6 2,11.6" fill="#a688fa"/><rect x="1.6" y="12" width="1.6" height="1.2" fill="#a688fa"/></g>
<g transform="translate(1555,264.7)"><polygon points="3.9,9.4 7,7.6 10.1,9.4 10.1,13 7,14.8 3.9,13" fill="#a688fa"/><path d="M7,11.2 V13.6 M7,11.2 L5,10 M7,11.2 L9,10" stroke="#3e4054" stroke-width="0.8" fill="none"/><polygon points="0,9.6 3,9.6 2,11.6" fill="#a688fa"/><rect x="1.6" y="12" width="1.6" height="1.2" fill="#a688fa"/></g>
<g transform="translate(1555,283.7)"><polygon points="3.9,9.4 7,7.6 10.1,9.4 10.1,13 7,14.8 3.9,13" fill="#a688fa"/><path d="M7,11.2 V13.6 M7,11.2 L5,10 M7,11.2 L9,10" stroke="#3e4054" stroke-width="0.8" fill="none"/><polygon points="0,9.6 3,9.6 2,11.6" fill="#a688fa"/><rect x="1.6" y="12" width="1.6" height="1.2" fill="#a688fa"/></g>
<g transform="translate(1555,302.7)"><polygon points="3.9,9.4 7,7.6 10.1,9.4 10.1,13 7,14.8 3.9,13" fill="#a688fa"/><path d="M7,11.2 V13.6 M7,11.2 L5,10 M7,11.2 L9,10" stroke="#3e4054" stroke-width="0.8" fill="none"/><polygon points="0,9.6 3,9.6 2,11.6" fill="#a688fa"/><rect x="1.6" y="12" width="1.6" height="1.2" fill="#a688fa"/></g>
<g transform="translate(1555,340.7)"><polygon points="3.9,9.4 7,7.6 10.1,9.4 10.1,13 7,14.8 3.9,13" fill="#a688fa"/><path d="M7,11.2 V13.6 M7,11.2 L5,10 M7,11.2 L9,10" stroke="#3e4054" stroke-width="0.8" fill="none"/><polygon points="0,9.6 3,9.6 2,11.6" fill="#a688fa"/><rect x="1.6" y="12" width="1.6" height="1.2" fill="#a688fa"/></g>
<g transform="translate(1555,359.7)"><polygon points="3.9,9.4 7,7.6 10.1,9.4 10.1,13 7,14.8 3.9,13" fill="#a688fa"/><path d="M7,11.2 V13.6 M7,11.2 L5,10 M7,11.2 L9,10" stroke="#3e4054" stroke-width="0.8" fill="none"/><polygon points="0,9.6 3,9.6 2,11.6" fill="#a688fa"/><rect x="1.6" y="12" width="1.6" height="1.2" fill="#a688fa"/></g>
<g transform="translate(1555,378.7)"><polygon points="3.9,9.4 7,7.6 10.1,9.4 10.1,13 7,14.8 3.9,13" fill="#a688fa"/><path d="M7,11.2 V13.6 M7,11.2 L5,10 M7,11.2 L9,10" stroke="#3e4054" stroke-width="0.8" fill="none"/><polygon points="0,9.6 3,9.6 2,11.6" fill="#a688fa"/><rect x="1.6" y="12" width="1.6" height="1.2" fill="#a688fa"/></g>
<g transform="translate(1555,397.7)"><polygon points="3.9,9.4 7,7.6 10.1,9.4 10.1,13 7,14.8 3.9,13" fill="#a688fa"/><path d="M7,11.2 V13.6 M7,11.2 L5,10 M7,11.2 L9,10" stroke="#3e4054" stroke-width="0.8" fill="none"/><polygon points="0,9.6 3,9.6 2,11.6" fill="#a688fa"/><rect x="1.6" y="12" width="1.6" height="1.2" fill="#a688fa"/></g>
<g transform="translate(1555,416.7)"><polygon points="3.9,9.4 7,7.6 10.1,9.4 10.1,13 7,14.8 3.9,13" fill="#a688fa"/><path d="M7,11.2 V13.6 M7,11.2 L5,10 M7,11.2 L9,10" stroke="#3e4054" stroke-width="0.8" fill="none"/><polygon points="0,9.6 3,9.6 2,11.6" fill="#a688fa"/><rect x="1.6" y="12" width="1.6" height="1.2" fill="#a688fa"/></g>
<g transform="translate(1555,435.7)"><polygon points="3.9,9.4 7,7.6 10.1,9.4 10.1,13 7,14.8 3.9,13" fill="#a688fa"/><path d="M7,11.2 V13.6 M7,11.2 L5,10 M7,11.2 L9,10" stroke="#3e4054" stroke-width="0.8" fill="none"/><polygon points="0,9.6 3,9.6 2,11.6" fill="#a688fa"/><rect x="1.6" y="12" width="1.6" height="1.2" fill="#a688fa"/></g>
<g transform="translate(1555,454.7)"><polygon points="3.9,9.4 7,7.6 10.1,9.4 10.1,13 7,14.8 3.9,13" fill="#a688fa"/><path d="M7,11.2 V13.6 M7,11.2 L5,10 M7,11.2 L9,10" stroke="#3e4054" stroke-width="0.8" fill="none"/><polygon points="0,9.6 3,9.6 2,11.6" fill="#a688fa"/><rect x="1.6" y="12" width="1.6" height="1.2" fill="#a688fa"/></g>
<g transform="translate(1555,473.7)"><polygon points="3.9,9.4 7,7.6 10.1,9.4 10.1,13 7,14.8 3.9,13" fill="#a688fa"/><path d="M7,11.2 V13.6 M7,11.2 L5,10 M7,11.2 L9,10" stroke="#3e4054" stroke-width="0.8" fill="none"/><polygon points="0,9.6 3,9.6 2,11.6" fill="#a688fa"/><rect x="1.6" y="12" width="1.6" height="1.2" fill="#a688fa"/></g>
<g transform="translate(1555,492.7)"><polygon points="3.9,9.4 7,7.6 10.1,9.4 10.1,13 7,14.8 3.9,13" fill="#a688fa"/><path d="M7,11.2 V13.6 M7,11.2 L5,10 M7,11.2 L9,10" stroke="#3e4054" stroke-width="0.8" fill="none"/><polygon points="0,9.6 3,9.6 2,11.6" fill="#a688fa"/><rect x="1.6" y="12" width="1.6" height="1.2" fill="#a688fa"/></g>
<g transform="translate(1555,511.7)"><polygon points="3.9,9.4 7,7.6 10.1,9.4 10.1,13 7,14.8 3.9,13" fill="#a688fa"/><path d="M7,11.2 V13.6 M7,11.2 L5,10 M7,11.2 L9,10" stroke="#3e4054" stroke-width="0.8" fill="none"/><polygon points="0,9.6 3,9.6 2,11.6" fill="#a688fa"/><rect x="1.6" y="12" width="1.6" height="1.2" fill="#a688fa"/></g>
<g transform="translate(1555,530.7)"><polygon points="3.9,9.4 7,7.6 10.1,9.4 10.1,13 7,14.8 3.9,13" fill="#a688fa"/><path d="M7,11.2 V13.6 M7,11.2 L5,10 M7,11.2 L9,10" stroke="#3e4054" stroke-width="0.8" fill="none"/><polygon points="0,9.6 3,9.6 2,11.6" fill="#a688fa"/><rect x="1.6" y="12" width="1.6" height="1.2" fill="#a688fa"/></g>
<g transform="translate(1535,551)"><circle cx="6.6" cy="9.3" r="4.7" fill="none" stroke="#f2e75a" stroke-width="1.6"/><circle cx="6.6" cy="9.3" r="2.3" fill="#f2e75a"/></g>
<g transform="translate(1555,570)"><path d="M9.3,1 H7.2 C4.6,1 3.3,2.3 3.3,4.6 V7.3 H0 V10 H3.3 V17.7 H6.7 V10 H9.3 V7.3 H6.7 V5 C6.7,4.1 7.1,3.7 8,3.7 H9.3 Z" fill="#a688fa"/></g>
<g transform="translate(1555,608)"><path d="M1.8,4 V12" stroke="#a688fa" stroke-width="1.9"/><polygon points="-0.2,10.6 3.8,10.6 1.8,14.8" fill="#a688fa"/><path d="M5.4,9 L7.2,4.4 L9,9 M6,7.6 H8.4" stroke="#a688fa" stroke-width="1.1" fill="none"/><path d="M5.6,10.6 H8.8 L5.6,14.2 H8.8" stroke="#a688fa" stroke-width="1.1" fill="none"/></g>
<g transform="translate(1555,627)"><path d="M1.8,4 V12" stroke="#a688fa" stroke-width="1.9"/><polygon points="-0.2,10.6 3.8,10.6 1.8,14.8" fill="#a688fa"/><path d="M5.4,9 L7.2,4.4 L9,9 M6,7.6 H8.4" stroke="#a688fa" stroke-width="1.1" fill="none"/><path d="M5.6,10.6 H8.8 L5.6,14.2 H8.8" stroke="#a688fa" stroke-width="1.1" fill="none"/></g>
<g transform="translate(1555,646)"><path d="M1.8,4 V12" stroke="#a688fa" stroke-width="1.9"/><polygon points="-0.2,10.6 3.8,10.6 1.8,14.8" fill="#a688fa"/><path d="M5.4,9 L7.2,4.4 L9,9 M6,7.6 H8.4" stroke="#a688fa" stroke-width="1.1" fill="none"/><path d="M5.6,10.6 H8.8 L5.6,14.2 H8.8" stroke="#a688fa" stroke-width="1.1" fill="none"/></g>
<g transform="translate(1535,665)"><circle cx="6.6" cy="9.3" r="4.7" fill="none" stroke="#f2e75a" stroke-width="1.6"/><circle cx="6.6" cy="9.3" r="2.3" fill="#f2e75a"/></g>
<g transform="translate(1555,684)"><path d="M9.3,1 H7.2 C4.6,1 3.3,2.3 3.3,4.6 V7.3 H0 V10 H3.3 V17.7 H6.7 V10 H9.3 V7.3 H6.7 V5 C6.7,4.1 7.1,3.7 8,3.7 H9.3 Z" fill="#a688fa"/></g>
<g transform="translate(1535,703)"><circle cx="6.6" cy="9.3" r="4.7" fill="none" stroke="#f2e75a" stroke-width="1.6"/><circle cx="6.6" cy="9.3" r="2.3" fill="#f2e75a"/></g>
<g transform="translate(1555,722)"><path d="M9.3,1 H7.2 C4.6,1 3.3,2.3 3.3,4.6 V7.3 H0 V10 H3.3 V17.7 H6.7 V10 H9.3 V7.3 H6.7 V5 C6.7,4.1 7.1,3.7 8,3.7 H9.3 Z" fill="#a688fa"/></g>
<g transform="translate(1555,741)"><path d="M9.3,1 H7.2 C4.6,1 3.3,2.3 3.3,4.6 V7.3 H0 V10 H3.3 V17.7 H6.7 V10 H9.3 V7.3 H6.7 V5 C6.7,4.1 7.1,3.7 8,3.7 H9.3 Z" fill="#a688fa"/></g>
<g transform="translate(1555,760)"><path d="M9.3,1 H7.2 C4.6,1 3.3,2.3 3.3,4.6 V7.3 H0 V10 H3.3 V17.7 H6.7 V10 H9.3 V7.3 H6.7 V5 C6.7,4.1 7.1,3.7 8,3.7 H9.3 Z" fill="#a688fa"/></g>
<g transform="translate(1555,779)"><path d="M9.3,1 H7.2 C4.6,1 3.3,2.3 3.3,4.6 V7.3 H0 V10 H3.3 V17.7 H6.7 V10 H9.3 V7.3 H6.7 V5 C6.7,4.1 7.1,3.7 8,3.7 H9.3 Z" fill="#a688fa"/></g>
<g transform="translate(1555,798)"><path d="M9.3,1 H7.2 C4.6,1 3.3,2.3 3.3,4.6 V7.3 H0 V10 H3.3 V17.7 H6.7 V10 H9.3 V7.3 H6.7 V5 C6.7,4.1 7.1,3.7 8,3.7 H9.3 Z" fill="#a688fa"/></g>
<g transform="translate(1555,817)"><path d="M9.3,1 H7.2 C4.6,1 3.3,2.3 3.3,4.6 V7.3 H0 V10 H3.3 V17.7 H6.7 V10 H9.3 V7.3 H6.7 V5 C6.7,4.1 7.1,3.7 8,3.7 H9.3 Z" fill="#a688fa"/></g>
<g transform="translate(1555,836)"><path d="M9.3,1 H7.2 C4.6,1 3.3,2.3 3.3,4.6 V7.3 H0 V10 H3.3 V17.7 H6.7 V10 H9.3 V7.3 H6.7 V5 C6.7,4.1 7.1,3.7 8,3.7 H9.3 Z" fill="#a688fa"/></g>
<g transform="translate(1555,855)"><path d="M9.3,1 H7.2 C4.6,1 3.3,2.3 3.3,4.6 V7.3 H0 V10 H3.3 V17.7 H6.7 V10 H9.3 V7.3 H6.7 V5 C6.7,4.1 7.1,3.7 8,3.7 H9.3 Z" fill="#a688fa"/></g>
<g transform="translate(1555,874)"><path d="M9.3,1 H7.2 C4.6,1 3.3,2.3 3.3,4.6 V7.3 H0 V10 H3.3 V17.7 H6.7 V10 H9.3 V7.3 H6.7 V5 C6.7,4.1 7.1,3.7 8,3.7 H9.3 Z" fill="#a688fa"/></g>
<g transform="translate(1555,893)"><path d="M9.3,1 H7.2 C4.6,1 3.3,2.3 3.3,4.6 V7.3 H0 V10 H3.3 V17.7 H6.7 V10 H9.3 V7.3 H6.7 V5 C6.7,4.1 7.1,3.7 8,3.7 H9.3 Z" fill="#a688fa"/></g>
<g transform="translate(1555,912)"><path d="M9.3,1 H7.2 C4.6,1 3.3,2.3 3.3,4.6 V7.3 H0 V10 H3.3 V17.7 H6.7 V10 H9.3 V7.3 H6.7 V5 C6.7,4.1 7.1,3.7 8,3.7 H9.3 Z" fill="#a688fa"/></g>
<g transform="translate(1555,931)"><path d="M9.3,1 H7.2 C4.6,1 3.3,2.3 3.3,4.6 V7.3 H0 V10 H3.3 V17.7 H6.7 V10 H9.3 V7.3 H6.7 V5 C6.7,4.1 7.1,3.7 8,3.7 H9.3 Z" fill="#a688fa"/></g>
<g transform="translate(1555,950)"><path d="M9.3,1 H7.2 C4.6,1 3.3,2.3 3.3,4.6 V7.3 H0 V10 H3.3 V17.7 H6.7 V10 H9.3 V7.3 H6.7 V5 C6.7,4.1 7.1,3.7 8,3.7 H9.3 Z" fill="#a688fa"/></g>
<g transform="translate(1555,969)"><path d="M9.3,1 H7.2 C4.6,1 3.3,2.3 3.3,4.6 V7.3 H0 V10 H3.3 V17.7 H6.7 V10 H9.3 V7.3 H6.7 V5 C6.7,4.1 7.1,3.7 8,3.7 H9.3 Z" fill="#a688fa"/></g>
<g transform="translate(1555,988)"><path d="M9.3,1 H7.2 C4.6,1 3.3,2.3 3.3,4.6 V7.3 H0 V10 H3.3 V17.7 H6.7 V10 H9.3 V7.3 H6.7 V5 C6.7,4.1 7.1,3.7 8,3.7 H9.3 Z" fill="#a688fa"/></g>
<g transform="translate(1555,1007)"><path d="M9.3,1 H7.2 C4.6,1 3.3,2.3 3.3,4.6 V7.3 H0 V10 H3.3 V17.7 H6.7 V10 H9.3 V7.3 H6.7 V5 C6.7,4.1 7.1,3.7 8,3.7 H9.3 Z" fill="#a688fa"/></g>
</svg>
<div id="t">
<i style="left:35px;top:0px"><span style="color:#2d2e3e;">cargo</span>      <span style="color:#d0d0c8;">1</span>                                                                                                           <span style="color:#d0d0c8;">NvimTree</span>      <span style="color:#d0d0c8;">dependency.rs</span>      <span style="color:#d0d0c8;">zsh;#toggleterm#1</span>      <span style="color:#d0d0c8;">OUTLINE</span></i>
<i style="left:25px;top:19px"><span style="color:#f2b27a;">~/dev/cargo/..</span></i>
<i style="left:1535px;top:19px;color:#f2e75a;font-family:'DejaVu Math TeX Gyre','DejaVu Sans',serif;font-size:12.5px;margin-left:-1px;margin-top:1px;-webkit-text-stroke:0;">𝓢</i>
<i style="left:325px;top:19px"><span style="color:#5f577f;">28</span>             <span style="color:#f2e75a;">DepKind</span><span style="color:#c8c8c6;">::</span><span style="color:#f2e75a;">Development</span> <span style="color:#c8c8c6;">=&gt;</span> <span style="color:#a688fa;">Some</span><span style="color:#c8c8c6;">(</span><span style="color:#6ee873;">"</span><span style="color:#6ee873;">dev</span><span style="color:#6ee873;">"</span><span style="color:#c8c8c6;">),</span></i>
<i style="left:1565px;top:19px"><span style="color:#f8f8f0;">Dependency</span></i>
<i style="left:65px;top:38px"><span style="color:#a688fa;">.git/</span></i>
<i style="left:325px;top:38px"><span style="color:#5f577f;">27</span>             <span style="color:#f2e75a;">DepKind</span><span style="color:#c8c8c6;">::</span><span style="color:#f2e75a;">Build</span> <span style="color:#c8c8c6;">=&gt;</span> <span style="color:#a688fa;">Some</span><span style="color:#c8c8c6;">(</span><span style="color:#6ee873;">"</span><span style="color:#6ee873;">build</span><span style="color:#6ee873;">"</span><span style="color:#c8c8c6;">),</span></i>
<i style="left:1575px;top:38px"><span style="color:#f8f8f0;">inner</span> <span style="color:#706c88;">Rc&lt;Inner&gt;</span></i>
<i style="left:65px;top:57px"><span style="color:#a688fa;">.github/</span></i>
<i style="left:1535px;top:57px;color:#f2e75a;font-family:'DejaVu Math TeX Gyre','DejaVu Sans',serif;font-size:12.5px;margin-left:-1px;margin-top:1px;-webkit-text-stroke:0;">𝓢</i>
<i style="left:325px;top:57px"><span style="color:#5f577f;">26</span>         <span style="color:#c8c8c6;">}</span>                   <span style="color:#77738e;">»</span> <span style="color:#77738e;">Option&lt;&amp;str&gt;</span></i>
<i style="left:1565px;top:57px"><span style="color:#f8f8f0;">Inner</span></i>
<i style="left:65px;top:76px"><span style="color:#a688fa;">ci/</span></i>
<i style="left:325px;top:76px"><span style="color:#5f577f;">25</span>         <span style="color:#c8c8c6;">.</span><span style="color:#a688fa;">serialize</span><span style="color:#c8c8c6;">(</span><span style="color:#f8f8f0;">s</span><span style="color:#c8c8c6;">)</span></i>
<i style="left:1575px;top:76px"><span style="color:#f8f8f0;">name</span> <span style="color:#706c88;">InternedString</span></i>
<i style="left:65px;top:95px"><span style="color:#a688fa;">crates/</span></i>
<i style="left:325px;top:95px"><span style="color:#5f577f;">24</span>     <span style="color:#c8c8c6;">}</span></i>
<i style="left:1575px;top:95px"><span style="color:#f8f8f0;">source<u>_</u>id</span> <span style="color:#706c88;">SourceId</span></i>
<i style="left:65px;top:114px"><span style="color:#c3a6f5;">src/</span></i>
<i style="left:325px;top:114px"><span style="color:#5f577f;">23</span> <span style="color:#c8c8c6;">}</span></i>
<i style="left:1575px;top:114px"><span style="color:#f8f8f0;">registry<u>_</u>id</span> <span style="color:#706c88;">Option&lt;SourceId&gt;</span></i>
<i style="left:85px;top:133px"><span style="color:#a688fa;">bin/</span></i>
<i style="left:325px;top:133px"><span style="color:#5f577f;">22</span></i>
<i style="left:1575px;top:133px"><span style="color:#f8f8f0;">req</span> <span style="color:#706c88;">OptVersionReq</span></i>
<i style="left:85px;top:152px"><span style="color:#c3a6f5;">cargo/</span></i>
<i style="left:325px;top:152px"><span style="color:#5f577f;">21</span> <span style="color:#ff86b0;">impl</span> <span style="color:#f2e75a;">Dependency</span> <span style="color:#c8c8c6;">{</span></i>
<i style="left:1575px;top:152px"><span style="color:#f8f8f0;">specified<u>_</u>req</span> <span style="color:#706c88;">bool</span></i>
<i style="left:105px;top:171px"><span style="color:#c3a6f5;">core/</span></i>
<i style="left:325px;top:171px"><span style="color:#5f577f;">20</span>     <span style="color:#77738e;">/// Attempt to create a `Dependency` from an entry in the manifest.</span></i>
<i style="left:1575px;top:171px"><span style="color:#f8f8f0;">kind</span> <span style="color:#706c88;">DepKind</span></i>
<i style="left:125px;top:190px"><span style="color:#a688fa;">compiler/</span></i>
<i style="left:325px;top:190px"><span style="color:#5f577f;">19</span>     <span style="color:#ff86b0;">pub</span> <span style="color:#ff86b0;">fn</span> <span style="color:#a688fa;">parse</span><span style="color:#c8c8c6;">(</span></i>
<i style="left:1575px;top:190px"><span style="color:#f8f8f0;">only<u>_</u>match<u>_</u>name</span> <span style="color:#706c88;">bool</span></i>
<i style="left:125px;top:209px"><span style="color:#a688fa;">resolver/</span></i>
<i style="left:325px;top:209px"><span style="color:#5f577f;">18</span>         <span style="color:#f2bb94;">name</span><span style="color:#c8c8c6;">:</span> <span style="color:#ff86b0;">impl</span> <span style="color:#f2e75a;">Into</span><span style="color:#c8c8c6;">&lt;</span><span style="color:#f2e75a;">InternedString</span><span style="color:#c8c8c6;">&gt;,</span></i>
<i style="left:1575px;top:209px"><span style="color:#f8f8f0;">explicit<u>_</u>name<u>_</u>in<u>_</u>toml</span> <span style="color:#706c88;">Option&lt;Inter</span></i>
<i style="left:125px;top:228px"><span style="color:#a688fa;">source/</span></i>
<i style="left:325px;top:228px"><span style="color:#5f577f;">17</span>         <span style="color:#f2bb94;">version</span><span style="color:#c8c8c6;">:</span> <span style="color:#f2e75a;">Option</span><span style="color:#c8c8c6;">&lt;&amp;</span><span style="color:#80f5b8;">str</span><span style="color:#c8c8c6;">&gt;,</span></i>
<i style="left:1575px;top:228px"><span style="color:#f8f8f0;">optional</span> <span style="color:#706c88;">bool</span></i>
<i style="left:125px;top:247px"><span style="color:#dcdcd4;">dependency.rs</span></i>
<i style="left:325px;top:247px"><span style="color:#5f577f;">16</span>         <span style="color:#f2bb94;">source<u>_</u>id</span><span style="color:#c8c8c6;">:</span> <span style="color:#f2e75a;">SourceId</span><span style="color:#c8c8c6;">,</span></i>
<i style="left:1575px;top:247px"><span style="color:#f8f8f0;">public</span> <span style="color:#706c88;">bool</span></i>
<i style="left:125px;top:266px"><span style="color:#dcdcd4;">features.rs</span></i>
<i style="left:325px;top:266px"><span style="color:#5f577f;">15</span>     <span style="color:#c8c8c6;">)</span> <span style="color:#c8c8c6;">-&gt;</span> <span style="color:#f2e75a;">CargoResult</span><span style="color:#c8c8c6;">&lt;</span><span style="color:#f2e75a;">Dependency</span><span style="color:#c8c8c6;">&gt;</span> <span style="color:#c8c8c6;">{</span></i>
<i style="left:1575px;top:266px"><span style="color:#f8f8f0;">default<u>_</u>features</span> <span style="color:#706c88;">bool</span></i>
<i style="left:125px;top:285px"><span style="color:#dcdcd4;">manifest.rs</span></i>
<i style="left:325px;top:285px"><span style="color:#5f577f;">14</span>         <span style="color:#ff86b0;">let</span> <span style="color:#f8f8f0;">name</span> <span style="color:#c8c8c6;">=</span> <span style="color:#f8f8f0;">name</span><span style="color:#c8c8c6;">.</span><span style="color:#a688fa;">into</span><span style="color:#c8c8c6;">();</span></i>
<i style="left:1575px;top:285px"><span style="color:#f8f8f0;">features</span> <span style="color:#706c88;">Vec&lt;InternedString&gt;</span></i>
<i style="left:125px;top:304px"><span style="color:#dcdcd4;">mod.rs</span></i>
<i style="left:325px;top:304px"><span style="color:#5f577f;">13</span>         <span style="color:#ff86b0;">let</span> <span style="color:#c8c8c6;">(</span><span style="color:#f8f8f0;">specified<u>_</u>req</span><span style="color:#c8c8c6;">,</span> <span style="color:#f8f8f0;">version<u>_</u>req</span><span style="color:#c8c8c6;">)</span> <span style="color:#c8c8c6;">=</span> <span style="color:#ff86b0;">match</span> <span style="color:#f8f8f0;">version</span> <span style="color:#c8c8c6;">{</span></i>
<i style="left:1575px;top:304px"><span style="color:#f8f8f0;">platform</span> <span style="color:#706c88;">Option&lt;Platform&gt;</span></i>
<i style="left:125px;top:323px"><span style="color:#dcdcd4;">package.rs</span></i>
<i style="left:1535px;top:323px;color:#f2e75a;font-family:'DejaVu Math TeX Gyre','DejaVu Sans',serif;font-size:12.5px;margin-left:-1px;margin-top:1px;-webkit-text-stroke:0;">𝓢</i>
<i style="left:325px;top:323px"><span style="color:#5f577f;">12</span>             <span style="color:#f8f8f0;">Some</span><span style="color:#c8c8c6;">(</span><span style="color:#f8f8f0;">v</span><span style="color:#c8c8c6;">)</span> <span style="color:#c8c8c6;">=&gt;</span> <span style="color:#ff86b0;">match</span> <span style="color:#f2e75a;">VersionReq</span><span style="color:#c8c8c6;">::</span><span style="color:#a688fa;">parse</span><span style="color:#c8c8c6;">(</span><span style="color:#f8f8f0;">v</span><span style="color:#c8c8c6;">)</span> <span style="color:#c8c8c6;">{</span></i>
<i style="left:1565px;top:323px"><span style="color:#f8f8f0;">SerializedDependency</span></i>
<i style="left:125px;top:342px"><span style="color:#dcdcd4;">package<u>_</u>id.rs</span></i>
<i style="left:325px;top:342px"><span style="color:#5f577f;">11</span>                 <span style="color:#f8f8f0;">Ok</span><span style="color:#c8c8c6;">(</span><span style="color:#f8f8f0;">req</span><span style="color:#c8c8c6;">)</span> <span style="color:#c8c8c6;">=&gt;</span> <span style="color:#c8c8c6;">(</span><span style="color:#f2bb94;">true</span><span style="color:#c8c8c6;">,</span> <span style="color:#f2e75a;">OptVersionReq</span><span style="color:#c8c8c6;">::</span><span style="color:#f5a463;">Req</span><span style="color:#c8c8c6;">(</span><span style="color:#f8f8f0;">req</span><span style="color:#c8c8c6;">)),</span></i>
<i style="left:1575px;top:342px"><span style="color:#f8f8f0;">name</span> <span style="color:#706c88;">&amp;'a str</span></i>
<i style="left:125px;top:361px"><span style="color:#dcdcd4;">package<u>_</u>id<u>_</u>spec.rs</span></i>
<i style="left:325px;top:361px"><span style="color:#5f577f;">10</span>                 <span style="color:#f8f8f0;">Err</span><span style="color:#c8c8c6;">(</span><span style="color:#f8f8f0;">err</span><span style="color:#c8c8c6;">)</span> <span style="color:#c8c8c6;">=&gt;</span> <span style="color:#c8c8c6;">{</span></i>
<i style="left:1575px;top:361px"><span style="color:#f8f8f0;">source</span> <span style="color:#706c88;">SourceId</span></i>
<i style="left:125px;top:380px"><span style="color:#dcdcd4;">profiles.rs</span></i>
<i style="left:335px;top:380px"><span style="color:#5f577f;">9</span>                     <span style="color:#ff86b0;">return</span> <span style="color:#a688fa;">Err</span><span style="color:#c8c8c6;">(</span><span style="color:#80f5b8;">anyhow</span><span style="color:#c8c8c6;">::</span><span style="color:#f2e75a;">Error</span><span style="color:#c8c8c6;">::</span><span style="color:#a688fa;">new</span><span style="color:#c8c8c6;">(</span><span style="color:#f8f8f0;">err</span><span style="color:#c8c8c6;">)</span><span style="color:#c8c8c6;">.</span><span style="color:#a688fa;">context</span><span style="color:#c8c8c6;">(</span><span style="color:#f27a6e;">format!</span><span style="color:#c8c8c6;">(</span></i>
<i style="left:1575px;top:380px"><span style="color:#f8f8f0;">req</span> <span style="color:#706c88;">String</span></i>
<i style="left:125px;top:399px"><span style="color:#dcdcd4;">registry.rs</span></i>
<i style="left:335px;top:399px"><span style="color:#5f577f;">8</span>                         <span style="color:#6ee873;">"</span><span style="color:#6ee873;">failed to parse the version requirement `{}` for dependency `{}`</span><span style="color:#6ee873;">"</span><span style="color:#c8c8c6;">,</span></i>
<i style="left:1575px;top:399px"><span style="color:#f8f8f0;">kind</span> <span style="color:#706c88;">DepKind</span></i>
<i style="left:125px;top:418px"><span style="color:#dcdcd4;">shell.rs</span></i>
<i style="left:335px;top:418px"><span style="color:#5f577f;">7</span>                         <span style="color:#f8f8f0;">v</span><span style="color:#c8c8c6;">,</span> <span style="color:#f8f8f0;">name</span><span style="color:#c8c8c6;">,</span></i>
<i style="left:1575px;top:418px"><span style="color:#f8f8f0;">rename</span> <span style="color:#706c88;">Option&lt;&amp;'a str&gt;</span></i>
<i style="left:125px;top:437px"><span style="color:#dcdcd4;">summary.rs</span></i>
<i style="left:335px;top:437px"><span style="color:#5f577f;">6</span>                     <span style="color:#c8c8c6;">)))</span></i>
<i style="left:1575px;top:437px"><span style="color:#f8f8f0;">optional</span> <span style="color:#706c88;">bool</span></i>
<i style="left:125px;top:456px"><span style="color:#dcdcd4;">workspace.rs</span></i>
<i style="left:335px;top:456px"><span style="color:#5f577f;">5</span>                 <span style="color:#c8c8c6;">}</span></i>
<i style="left:1575px;top:456px"><span style="color:#f8f8f0;">uses<u>_</u>default<u>_</u>features</span> <span style="color:#706c88;">bool</span></i>
<i style="left:105px;top:475px"><span style="color:#a688fa;">ops/</span></i>
<i style="left:335px;top:475px"><span style="color:#5f577f;">4</span>             <span style="color:#c8c8c6;">},</span></i>
<i style="left:1575px;top:475px"><span style="color:#f8f8f0;">features</span> <span style="color:#706c88;">&amp;'a [InternedString]</span></i>
<i style="left:105px;top:494px"><span style="color:#a688fa;">sources/</span></i>
<i style="left:335px;top:494px"><span style="color:#5f577f;">3</span>             <span style="color:#f8f8f0;">None</span> <span style="color:#c8c8c6;">=&gt;</span> <span style="color:#c8c8c6;">(</span><span style="color:#f2bb94;">false</span><span style="color:#c8c8c6;">,</span> <span style="color:#f2e75a;">OptVersionReq</span><span style="color:#c8c8c6;">::</span><span style="color:#f2e75a;">Any</span><span style="color:#c8c8c6;">),</span></i>
<i style="left:1575px;top:494px"><span style="color:#f8f8f0;">target</span> <span style="color:#706c88;">Option&lt;&amp;'a Platform&gt;</span></i>
<i style="left:105px;top:513px"><span style="color:#a688fa;">util/</span></i>
<i style="left:335px;top:513px"><span style="color:#5f577f;">2</span>         <span style="color:#c8c8c6;">};</span></i>
<i style="left:1575px;top:513px"><span style="color:#f8f8f0;">registry</span> <span style="color:#706c88;">Option&lt;&amp;'a str&gt;</span></i>
<i style="left:105px;top:532px"><span style="color:#dcdcd4;">lib.rs</span></i>
<i style="left:335px;top:532px"><span style="color:#5f577f;">1</span></i>
<i style="left:1575px;top:532px"><span style="color:#f8f8f0;">path</span> <span style="color:#706c88;">Option&lt;PathBuf&gt;</span></i>
<i style="left:105px;top:551px"><span style="color:#dcdcd4;">macros.rs</span></i>
<i style="left:315px;top:551px"><span style="color:#e8e8e0;">135</span>         <span style="color:#ff86b0;">let</span> <span style="color:#ff86b0;">mut</span> <span style="color:#f8f8f0;">ret</span> <span style="color:#c8c8c6;">=</span> <span style="color:#f2e75a;">Dependency</span><span style="color:#c8c8c6;">::</span><span style="color:#bcd0ea;">n</span><span style="color:#a688fa;">ew<u>_</u>override</span><span style="color:#c8c8c6;">(</span><span style="color:#f8f8f0;">name</span><span style="color:#c8c8c6;">,</span> <span style="color:#f8f8f0;">source<u>_</u>id</span><span style="color:#c8c8c6;">);</span></i>
<i style="left:1555px;top:551px"><span style="color:#f8f8f0;">impl ser::Serialize for Dependency</span></i>
<i style="left:85px;top:570px"><span style="color:#a688fa;">doc/</span></i>
<i style="left:335px;top:570px"><span style="color:#5f577f;">1</span>         <span style="color:#c8c8c6;">{</span></i>
<i style="left:1575px;top:570px"><span style="color:#f8f8f0;">serialize</span> <span style="color:#706c88;">fn&lt;S&gt;(&amp;self, s: S) -&gt; Re</span></i>
<i style="left:85px;top:589px"><span style="color:#a688fa;">etc/</span></i>
<i style="left:1535px;top:589px;color:#f2e75a;font-family:'DejaVu Sans','DejaVu Math TeX Gyre',serif;font-size:15px;font-weight:bold;margin-left:-1px;margin-top:1px;">ℰ</i>
<i style="left:335px;top:589px"><span style="color:#5f577f;">2</span>             <span style="color:#ff86b0;">let</span> <span style="color:#f8f8f0;">ptr</span> <span style="color:#c8c8c6;">=</span> <span style="color:#f2e75a;">Rc</span><span style="color:#c8c8c6;">::</span><span style="color:#a688fa;">make<u>_</u>mut</span><span style="color:#c8c8c6;">(</span><span style="color:#c8c8c6;">&amp;</span><span style="color:#ff86b0;">mut</span> <span style="color:#f8f8f0;">ret</span><span style="color:#c8c8c6;">.</span><span style="color:#c8c8c6;">inner</span><span style="color:#c8c8c6;">);</span></i>
<i style="left:1555px;top:589px"><span style="color:#f8f8f0;">DepKind</span></i>
<i style="left:85px;top:608px"><span style="color:#787589;">target/</span></i>
<i style="left:335px;top:608px"><span style="color:#5f577f;">3</span>             <span style="color:#f8f8f0;">ptr</span><span style="color:#c8c8c6;">.</span><span style="color:#c8c8c6;">only<u>_</u>match<u>_</u>name</span> <span style="color:#c8c8c6;">=</span> <span style="color:#f2bb94;">false</span><span style="color:#c8c8c6;">;</span></i>
<i style="left:1575px;top:608px"><span style="color:#f8f8f0;">Normal</span></i>
<i style="left:65px;top:627px"><span style="color:#a688fa;">tests/</span></i>
<i style="left:325px;top:627px"><span style="color:#2d2e3e;">NORMAL</span>     <span style="color:#f2e75a;">master</span>      <span style="color:#c9b6c8;">src/cargo/core/dependency.rs</span>               <span style="color:#3a3a32;">∘</span> <span style="color:#3a3a32;">(ƒ parse)</span>      <span style="color:#3a3a32;">1</span>   <span style="color:#c9b6c8;">RUST</span>     <span style="color:#d0d0c8;">utf-8</span>   <span style="color:#2d2e3e;">135:34</span>   <span style="color:#2d2e3e;">34%</span></i>
<i style="left:1575px;top:627px"><span style="color:#f8f8f0;">Development</span></i>
<i style="left:65px;top:646px"><span style="color:#dcdcd4;">.gitignore</span></i>
<i style="left:365px;top:646px"><span style="color:#fbfbf3;-webkit-text-stroke:0.45px;">m</span>   <span style="color:#fbfbf3;">•••</span>     <span style="color:#fbfbf3;">•••</span>     <span style="color:#fbfbf3;">•••</span>     <span style="color:#fbfbf3;">•••</span>     <span style="color:#fbfbf3;">•••</span>     <span style="color:#fbfbf3;">•••</span>     <span style="color:#fbfbf3;">•••</span>     <span style="color:#fbfbf3;">•••</span>     <span style="color:#fbfbf3;">•••</span></i>
<i style="left:1575px;top:646px"><span style="color:#f8f8f0;">Build</span></i>
<i style="left:65px;top:665px"><span style="color:#dcdcd4;">build.rs</span></i>
<i style="left:355px;top:665px"><span style="color:#fbfbf3;-webkit-text-stroke:0.45px;">1m</span>   <span style="color:#fbfbf3;">•••</span>     <span style="color:#fbfbf3;">•••</span>     <span style="color:#fbfbf3;">•••</span>     <span style="color:#fbfbf3;">•••</span>     <span style="color:#fbfbf3;">•••</span>     <span style="color:#fbfbf3;">•••</span>     <span style="color:#fbfbf3;">•••</span>     <span style="color:#fbfbf3;">•••</span>     <span style="color:#fbfbf3;">•••</span></i>
<i style="left:1555px;top:665px"><span style="color:#f8f8f0;">impl ser::Serialize for DepKind</span></i>
<i style="left:85px;top:684px"><span style="color:#787589;">Cargo.lock</span></i>
<i style="left:345px;top:684px"><span style="color:#fbfbf3;-webkit-text-stroke:0.45px;">30m</span>   <span style="color:#3a3a32;">•••</span>             <span style="color:#3a3a32;">•••</span>     <span style="color:#3a3a32;">•••</span>     <span style="color:#3a3a32;">•••</span>     <span style="color:#3a3a32;">•••</span>     <span style="color:#3a3a32;">•••</span>     <span style="color:#3a3a32;">•••</span>     <span style="color:#3a3a32;">•••</span></i>
<i style="left:1575px;top:684px"><span style="color:#f8f8f0;">serialize</span> <span style="color:#706c88;">fn&lt;S&gt;(&amp;self, s: S) -&gt; Re</span></i>
<i style="left:65px;top:703px"><span style="color:#80f5b8;">Cargo.toml</span></i>
<i style="left:325px;top:703px"><span style="color:#fbfbf3;-webkit-text-stroke:0.45px;">1;30m</span>   <span style="color:#3a3a32;">•••</span>             <span style="color:#3a3a32;">•••</span>     <span style="color:#3a3a32;">•••</span>     <span style="color:#3a3a32;">•••</span>     <span style="color:#3a3a32;">•••</span>     <span style="color:#3a3a32;">•••</span>     <span style="color:#3a3a32;">•••</span>     <span style="color:#3a3a32;">•••</span></i>
<i style="left:1555px;top:703px"><span style="color:#f8f8f0;">impl Dependency</span></i>
<i style="left:65px;top:722px"><span style="color:#dcdcd4;">CHANGELOG.md</span></i>
<i style="left:345px;top:722px"><span style="color:#fbfbf3;-webkit-text-stroke:0.45px;">31m</span>   <span style="color:#f27a6e;">•••</span>     <span style="color:#f27a6e;">•••</span>             <span style="color:#f27a6e;">•••</span>     <span style="color:#f27a6e;">•••</span>     <span style="color:#f27a6e;">•••</span>     <span style="color:#f27a6e;">•••</span>     <span style="color:#f27a6e;">•••</span>     <span style="color:#f27a6e;">•••</span></i>
<i style="left:1575px;top:722px"><span style="color:#f8f8f0;">parse</span> <span style="color:#706c88;">fn( name: impl Into&lt;Interned</span></i>
<i style="left:65px;top:741px"><span style="color:#dcdcd4;">CONTRIBUTING.md</span></i>
<i style="left:325px;top:741px"><span style="color:#fbfbf3;-webkit-text-stroke:0.45px;">1;31m</span>   <span style="color:#f27a6e;">•••</span>     <span style="color:#f27a6e;">•••</span>             <span style="color:#f27a6e;">•••</span>     <span style="color:#f27a6e;">•••</span>     <span style="color:#f27a6e;">•••</span>     <span style="color:#f27a6e;">•••</span>     <span style="color:#f27a6e;">•••</span>     <span style="color:#f27a6e;">•••</span></i>
<i style="left:1575px;top:741px"><span style="color:#f8f8f0;">new<u>_</u>override</span> <span style="color:#706c88;">fn(name: InternedStri</span></i>
<i style="left:65px;top:760px"><span style="color:#dcdcd4;">LICENSE-APACHE</span></i>
<i style="left:345px;top:760px"><span style="color:#fbfbf3;-webkit-text-stroke:0.45px;">32m</span>   <span style="color:#6ee873;">•••</span>     <span style="color:#6ee873;">•••</span>     <span style="color:#6ee873;">•••</span>             <span style="color:#6ee873;">•••</span>     <span style="color:#6ee873;">•••</span>     <span style="color:#6ee873;">•••</span>     <span style="color:#6ee873;">•••</span>     <span style="color:#6ee873;">•••</span></i>
<i style="left:1575px;top:760px"><span style="color:#f8f8f0;">version<u>_</u>req</span> <span style="color:#706c88;">fn(&amp;self) -&gt; &amp;OptVersi</span></i>
<i style="left:65px;top:779px"><span style="color:#dcdcd4;">LICENSE-MIT</span></i>
<i style="left:325px;top:779px"><span style="color:#fbfbf3;-webkit-text-stroke:0.45px;">1;32m</span>   <span style="color:#6ee873;">•••</span>     <span style="color:#6ee873;">•••</span>     <span style="color:#6ee873;">•••</span>             <span style="color:#6ee873;">•••</span>     <span style="color:#6ee873;">•••</span>     <span style="color:#6ee873;">•••</span>     <span style="color:#6ee873;">•••</span>     <span style="color:#6ee873;">•••</span></i>
<i style="left:1575px;top:779px"><span style="color:#f8f8f0;">name<u>_</u>in<u>_</u>toml</span> <span style="color:#706c88;">fn(&amp;self) -&gt; Interned</span></i>
<i style="left:65px;top:798px"><span style="color:#dcdcd4;">LICENSE-THIRD-PARTY</span></i>
<i style="left:345px;top:798px"><span style="color:#fbfbf3;-webkit-text-stroke:0.45px;">33m</span>   <span style="color:#f2e75a;">•••</span>     <span style="color:#f2e75a;">•••</span>     <span style="color:#f2e75a;">•••</span>     <span style="color:#f2e75a;">•••</span>             <span style="color:#f2e75a;">•••</span>     <span style="color:#f2e75a;">•••</span>     <span style="color:#f2e75a;">•••</span>     <span style="color:#f2e75a;">•••</span></i>
<i style="left:1575px;top:798px"><span style="color:#f8f8f0;">package<u>_</u>name</span> <span style="color:#706c88;">fn(&amp;self) -&gt; Interned</span></i>
<i style="left:65px;top:817px"><span style="color:#7be05a;">publish.py</span></i>
<i style="left:325px;top:817px"><span style="color:#fbfbf3;-webkit-text-stroke:0.45px;">1;33m</span>   <span style="color:#f2e75a;">•••</span>     <span style="color:#f2e75a;">•••</span>     <span style="color:#f2e75a;">•••</span>     <span style="color:#f2e75a;">•••</span>             <span style="color:#f2e75a;">•••</span>     <span style="color:#f2e75a;">•••</span>     <span style="color:#f2e75a;">•••</span>     <span style="color:#f2e75a;">•••</span></i>
<i style="left:1575px;top:817px"><span style="color:#f8f8f0;">source<u>_</u>id</span> <span style="color:#706c88;">fn(&amp;self) -&gt; SourceId</span></i>
<i style="left:65px;top:836px"><span style="color:#80f5b8;">README.md</span></i>
<i style="left:345px;top:836px"><span style="color:#fbfbf3;-webkit-text-stroke:0.45px;">34m</span>   <span style="color:#a688fa;">•••</span>     <span style="color:#a688fa;">•••</span>     <span style="color:#a688fa;">•••</span>     <span style="color:#a688fa;">•••</span>     <span style="color:#a688fa;">•••</span>             <span style="color:#a688fa;">•••</span>     <span style="color:#a688fa;">•••</span>     <span style="color:#a688fa;">•••</span></i>
<i style="left:1575px;top:836px"><span style="color:#f8f8f0;">registry<u>_</u>id</span> <span style="color:#706c88;">fn(&amp;self) -&gt; Option&lt;So</span></i>
<i style="left:65px;top:855px"><span style="color:#dcdcd4;">triagebot.toml</span></i>
<i style="left:325px;top:855px"><span style="color:#fbfbf3;-webkit-text-stroke:0.45px;">1;34m</span>   <span style="color:#a688fa;">•••</span>     <span style="color:#a688fa;">•••</span>     <span style="color:#a688fa;">•••</span>     <span style="color:#a688fa;">•••</span>     <span style="color:#a688fa;">•••</span>             <span style="color:#a688fa;">•••</span>     <span style="color:#a688fa;">•••</span>     <span style="color:#a688fa;">•••</span></i>
<i style="left:1575px;top:855px"><span style="color:#f8f8f0;">set<u>_</u>registry<u>_</u>id</span> <span style="color:#706c88;">fn(&amp;mut self, regi</span></i>
<i style="left:5px;top:874px"><span style="color:#45465c;">~</span></i>
<i style="left:345px;top:874px"><span style="color:#fbfbf3;-webkit-text-stroke:0.45px;">35m</span>   <span style="color:#ff86b0;">•••</span>     <span style="color:#ff86b0;">•••</span>     <span style="color:#ff86b0;">•••</span>     <span style="color:#ff86b0;">•••</span>     <span style="color:#ff86b0;">•••</span>     <span style="color:#ff86b0;">•••</span>             <span style="color:#ff86b0;">•••</span>     <span style="color:#ff86b0;">•••</span></i>
<i style="left:1575px;top:874px"><span style="color:#f8f8f0;">kind</span> <span style="color:#706c88;">fn(&amp;self) -&gt; DepKind</span></i>
<i style="left:5px;top:893px"><span style="color:#45465c;">~</span></i>
<i style="left:325px;top:893px"><span style="color:#fbfbf3;-webkit-text-stroke:0.45px;">1;35m</span>   <span style="color:#ff86b0;">•••</span>     <span style="color:#ff86b0;">•••</span>     <span style="color:#ff86b0;">•••</span>     <span style="color:#ff86b0;">•••</span>     <span style="color:#ff86b0;">•••</span>     <span style="color:#ff86b0;">•••</span>             <span style="color:#ff86b0;">•••</span>     <span style="color:#ff86b0;">•••</span></i>
<i style="left:1575px;top:893px"><span style="color:#f8f8f0;">is<u>_</u>public</span> <span style="color:#706c88;">fn(&amp;self) -&gt; bool</span></i>
<i style="left:5px;top:912px"><span style="color:#45465c;">~</span></i>
<i style="left:345px;top:912px"><span style="color:#fbfbf3;-webkit-text-stroke:0.45px;">36m</span>   <span style="color:#80f5b8;">•••</span>     <span style="color:#80f5b8;">•••</span>     <span style="color:#80f5b8;">•••</span>     <span style="color:#80f5b8;">•••</span>     <span style="color:#80f5b8;">•••</span>     <span style="color:#80f5b8;">•••</span>     <span style="color:#80f5b8;">•••</span>             <span style="color:#80f5b8;">•••</span></i>
<i style="left:1575px;top:912px"><span style="color:#f8f8f0;">set<u>_</u>public</span> <span style="color:#706c88;">fn(&amp;mut self, public: b</span></i>
<i style="left:5px;top:931px"><span style="color:#45465c;">~</span></i>
<i style="left:325px;top:931px"><span style="color:#fbfbf3;-webkit-text-stroke:0.45px;">1;36m</span>   <span style="color:#80f5b8;">•••</span>     <span style="color:#80f5b8;">•••</span>     <span style="color:#80f5b8;">•••</span>     <span style="color:#80f5b8;">•••</span>     <span style="color:#80f5b8;">•••</span>     <span style="color:#80f5b8;">•••</span>     <span style="color:#80f5b8;">•••</span>             <span style="color:#80f5b8;">•••</span></i>
<i style="left:1575px;top:931px"><span style="color:#f8f8f0;">specified<u>_</u>req</span> <span style="color:#706c88;">fn(&amp;self) -&gt; bool</span></i>
<i style="left:5px;top:950px"><span style="color:#45465c;">~</span></i>
<i style="left:345px;top:950px"><span style="color:#fbfbf3;-webkit-text-stroke:0.45px;">37m</span>   <span style="color:#c9b6c8;">•••</span>     <span style="color:#c9b6c8;">•••</span>     <span style="color:#c9b6c8;">•••</span>     <span style="color:#c9b6c8;">•••</span>     <span style="color:#c9b6c8;">•••</span>     <span style="color:#c9b6c8;">•••</span>     <span style="color:#c9b6c8;">•••</span>     <span style="color:#c9b6c8;">•••</span></i>
<i style="left:1575px;top:950px"><span style="color:#f8f8f0;">platform</span> <span style="color:#706c88;">fn(&amp;self) -&gt; Option&lt;&amp;Plat</span></i>
<i style="left:5px;top:969px"><span style="color:#45465c;">~</span></i>
<i style="left:325px;top:969px"><span style="color:#fbfbf3;-webkit-text-stroke:0.45px;">1;37m</span>   <span style="color:#c9b6c8;">•••</span>     <span style="color:#c9b6c8;">•••</span>     <span style="color:#c9b6c8;">•••</span>     <span style="color:#c9b6c8;">•••</span>     <span style="color:#c9b6c8;">•••</span>     <span style="color:#c9b6c8;">•••</span>     <span style="color:#c9b6c8;">•••</span>     <span style="color:#c9b6c8;">•••</span></i>
<i style="left:1575px;top:969px"><span style="color:#f8f8f0;">explicit<u>_</u>name<u>_</u>in<u>_</u>toml</span> <span style="color:#706c88;">fn(&amp;self) -&gt;</span></i>
<i style="left:5px;top:988px"><span style="color:#45465c;">~</span></i>
<i style="left:1575px;top:988px"><span style="color:#f8f8f0;">set<u>_</u>kind</span> <span style="color:#706c88;">fn(&amp;mut self, kind: DepKi</span></i>
<i style="left:5px;top:1007px"><span style="color:#45465c;">~</span></i>
<i style="left:315px;top:1007px"><span style="color:#80f5b8;-webkit-text-stroke:0.45px;">cargo</span> <span style="color:#fbfbf3;-webkit-text-stroke:0.45px;">at</span>    <span style="color:#fbfbf3;-webkit-text-stroke:0.45px;">on</span>   <span style="color:#f2e75a;-webkit-text-stroke:0.45px;">master</span> <span style="color:#6ee873;-webkit-text-stroke:0.45px;">➜</span></i>
<i style="left:1575px;top:1007px"><span style="color:#f8f8f0;">set<u>_</u>features</span> <span style="color:#706c88;">fn( &amp;mut self, featur</span></i>
<i style="left:25px;top:1026px"><span style="color:#d0d0c8;">NvimTree</span>               <span style="color:#d0d0c8;">13:0</span></i>
<i style="left:335px;top:1026px"><span style="color:#d0d0c8;">zsh;#toggleterm#1</span>                                                                                               <span style="color:#d0d0c8;">25:25</span></i>
<i style="left:1535px;top:1026px"><span style="color:#d0d0c8;">OUTLINE</span>                          <span style="color:#d0d0c8;">38:1</span></i>
</div></div></body></html>
